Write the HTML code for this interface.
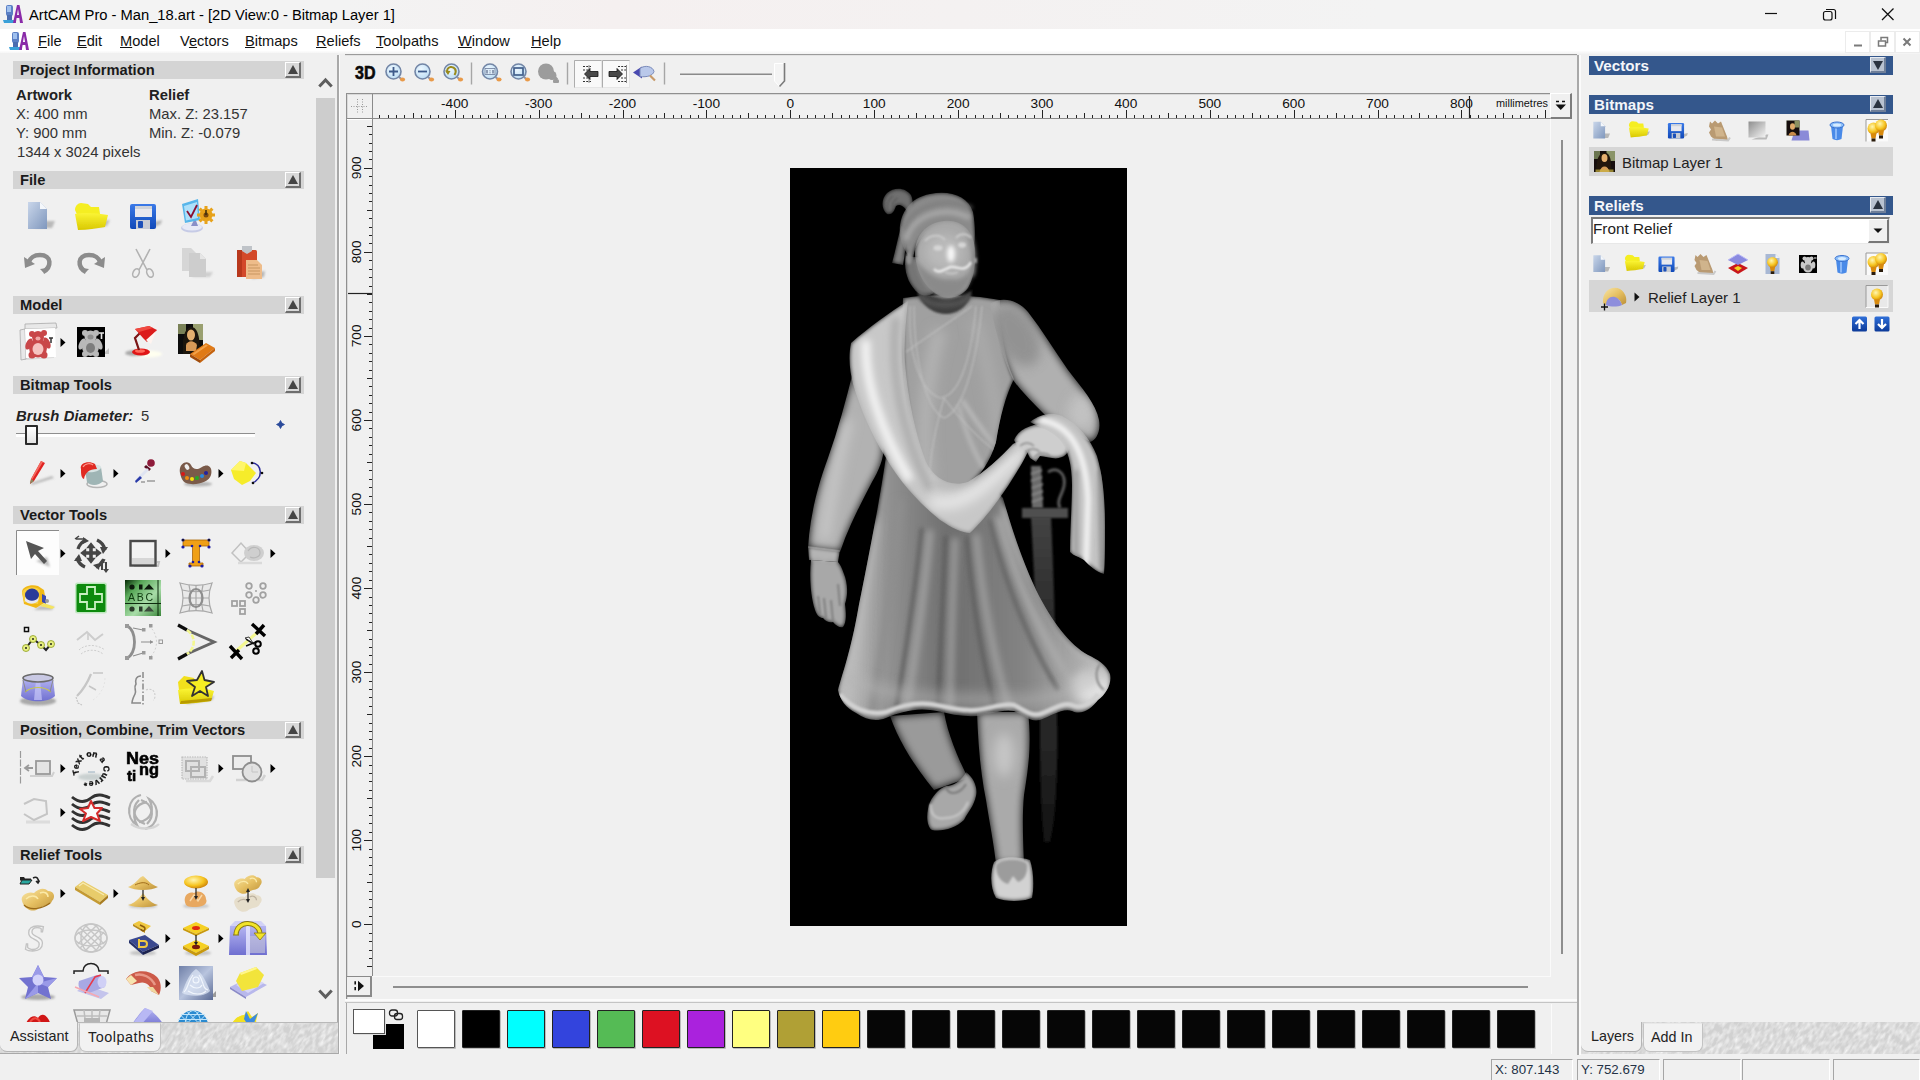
<!DOCTYPE html>
<html><head><meta charset="utf-8"><title>ArtCAM Pro</title>
<style>
*{box-sizing:border-box;margin:0;padding:0}
html,body{width:1920px;height:1080px;overflow:hidden;background:#f0f0f0;font-family:"Liberation Sans",sans-serif;color:#000}
.abs{position:absolute}
#titlebar{position:absolute;left:0;top:0;width:1920px;height:29px;background:linear-gradient(90deg,#f3f3f3 0%,#f3f3f3 18%,#f5f0f0 32%,#f4f1f1 50%,#f3f3f3 72%,#f3f3f3 100%)}
#titlebar .t{position:absolute;left:29px;top:6px;font-size:14.75px;line-height:19px;white-space:nowrap;color:#000;letter-spacing:-0.02px}
#menubar{position:absolute;left:0;top:29px;width:1920px;height:25px;background:linear-gradient(#fff 0,#fff 86%,#f2f2f2 100%)}
#menubar span{position:absolute;top:3px;font-size:14.6px;line-height:19px;white-space:nowrap;color:#111}
#menubar u{text-decoration:underline;text-underline-offset:1px}
/* left panel */
#left{position:absolute;left:0;top:53px;width:338px;height:969px;background:#f0f0f0;overflow:hidden}
.lh{position:absolute;left:12px;width:292px;height:19px;background:#d4d4d4}
.lh b{position:absolute;left:7px;top:1px;font-size:14.7px;line-height:17px;font-weight:700;color:#1a1a1a;white-space:nowrap}
.lh i.btn,.rh i.btn{position:absolute;right:3px;top:1px;width:16px;height:16px;background:#d8d8d8;border-top:1px solid #fff;border-left:1px solid #fff;border-right:2px solid #6e6e6e;border-bottom:2px solid #6e6e6e}
.tri-up{position:absolute;left:2px;top:2px;width:0;height:0;border-left:5px solid transparent;border-right:5px solid transparent;border-bottom:9px solid #444}
.tri-dn{position:absolute;left:2px;top:3px;width:0;height:0;border-left:5px solid transparent;border-right:5px solid transparent;border-top:9px solid #444}
.pi{position:absolute;font-size:14.8px;line-height:19px;color:#333;white-space:nowrap}
.pi b{color:#222}
/* right panel */
.rh{position:absolute;left:1589px;width:304px;height:19px;background:#34578c}
.rh b{position:absolute;left:5px;top:1px;font-size:15.2px;line-height:17px;font-weight:700;color:#f4f6fa;white-space:nowrap}
.row{position:absolute;left:1589px;width:304px;background:#d6d6d6}
.ic{position:absolute;overflow:visible}
</style></head><body>
<div id="titlebar">
 <svg class="abs" style="left:2px;top:3px" width="22" height="22" viewBox="0 0 22 22">
  <rect x="4" y="2" width="7" height="11" rx="2" fill="#5b7fc4"/><rect x="5" y="3" width="4" height="6" fill="#9fc0ee"/>
  <path d="M1 17 L13 17 L14 20 L2 20Z" fill="#3aa0d8"/><rect x="5" y="12" width="5" height="5" fill="#4b6db0"/>
  <path d="M11 20 L15 2 L17.5 2 L21 20 L18 20 L17.3 15 L14.6 15 L13.8 20Z M15 12 L17 12 L16 6Z" fill="#8a2aa8" fill-rule="evenodd"/>
 </svg>
 <div class="t">ArtCAM Pro - Man_18.art - [2D View:0 - Bitmap Layer 1]</div>
 <svg class="abs" style="left:1750px;top:0" width="170" height="29" viewBox="0 0 170 29">
  <path d="M15 13.5h12" stroke="#111" stroke-width="1.2" fill="none"/>
  <rect x="73.500" y="11.500" width="8.500" height="8.500" rx="2" fill="none" stroke="#111" stroke-width="1.200"/>
  <path d="M76 9.500h7.500a2 2 0 0 1 2 2v7.500" fill="none" stroke="#111" stroke-width="1.200"/>
  <path d="M132 8.500l11.500 11.500M143.500 8.500l-11.500 11.500" stroke="#111" stroke-width="1.300" fill="none"/>
 </svg>
</div>
<div id="menubar">
 <svg class="abs" style="left:8px;top:1px" width="22" height="22" viewBox="0 0 22 22">
  <rect x="4" y="2" width="7" height="11" rx="2" fill="#5b7fc4"/><rect x="5" y="3" width="4" height="6" fill="#9fc0ee"/>
  <path d="M1 17 L13 17 L14 20 L2 20Z" fill="#3aa0d8"/><rect x="5" y="12" width="5" height="5" fill="#4b6db0"/>
  <path d="M11 20 L15 2 L17.5 2 L21 20 L18 20 L17.3 15 L14.6 15 L13.8 20Z M15 12 L17 12 L16 6Z" fill="#8a2aa8" fill-rule="evenodd"/>
 </svg>
 <span style="left:38px"><u>F</u>ile</span>
 <span style="left:77px"><u>E</u>dit</span>
 <span style="left:120px"><u>M</u>odel</span>
 <span style="left:180px">V<u>e</u>ctors</span>
 <span style="left:245px"><u>B</u>itmaps</span>
 <span style="left:316px"><u>R</u>eliefs</span>
 <span style="left:376px"><u>T</u>oolpaths</span>
 <span style="left:458px"><u>W</u>indow</span>
 <span style="left:531px"><u>H</u>elp</span>
</div>
<div id="left">
 <!-- coordinates inside #left are page y - 53 -->
 <div class="lh" style="top:8px;left:13px;width:291px;height:18px"><b>Project Information</b><i class="btn"><s class="tri-up"></s></i></div>
 <div class="pi" style="left:16px;top:33px"><b>Artwork</b></div>
 <div class="pi" style="left:16px;top:52px">X: 400 mm</div>
 <div class="pi" style="left:16px;top:71px">Y: 900 mm</div>
 <div class="pi" style="left:17px;top:90px">1344 x 3024 pixels</div>
 <div class="pi" style="left:149px;top:33px"><b>Relief</b></div>
 <div class="pi" style="left:149px;top:52px">Max. Z: 23.157</div>
 <div class="pi" style="left:149px;top:71px">Min. Z: -0.079</div>
 <div class="lh" style="top:118px;left:13px;width:291px;height:18px"><b>File</b><i class="btn"><s class="tri-up"></s></i></div>
 <div class="lh" style="top:243px;left:13px;width:291px;height:18px"><b>Model</b><i class="btn"><s class="tri-up"></s></i></div>
 <div class="lh" style="top:323px;left:13px;width:291px;height:18px"><b>Bitmap Tools</b><i class="btn"><s class="tri-up"></s></i></div>
 <div class="pi" style="left:16px;top:354px;color:#222;letter-spacing:0.150px"><b><i>Brush Diameter:</i></b></div>
 <div class="pi" style="left:141px;top:354px;color:#333">5</div>
 <!-- slider -->
 <div class="abs" style="left:16px;top:380px;width:239px;height:4px;background:linear-gradient(#8e8e8e 0,#8e8e8e 26%,#fdfdfd 30%,#fff 100%)"></div>
 <div class="abs" style="left:25px;top:372px;width:13px;height:20px;background:linear-gradient(#fff,#e4e4e4);border:2px solid #2a2a2a;border-radius:1px"></div>
 <svg class="abs" style="left:275px;top:366px" width="11" height="11" viewBox="-5.500 -5.500 11 11"><path d="M0 -4 Q0.800 -0.800 4 0 Q0.800 0.800 0 4 Q-0.800 0.800 -4 0 Q-0.800 -0.800 0 -4Z" fill="#2a4a9a" stroke="#2a4a9a" stroke-width="0.800"/></svg>
 <div class="lh" style="top:453px;left:13px;width:291px;height:18px"><b>Vector Tools</b><i class="btn"><s class="tri-up"></s></i></div>
 <div class="lh" style="top:668px;left:13px;width:291px;height:18px"><b>Position, Combine, Trim Vectors</b><i class="btn"><s class="tri-up"></s></i></div>
 <div class="lh" style="top:793px;left:13px;width:291px;height:18px"><b>Relief Tools</b><i class="btn"><s class="tri-up"></s></i></div>
 <!-- scrollbar -->
 <div class="abs" style="left:316px;top:45px;width:19px;height:780px;background:#cdcdcd"></div>
 <svg class="abs" style="left:316px;top:20px" width="20" height="20" viewBox="0 0 20 20"><path d="M3.300 13.500 L9.500 7 L15.700 13.500" fill="none" stroke="#5e5e5e" stroke-width="3"/></svg>
 <svg class="abs" style="left:316px;top:930px" width="20" height="20" viewBox="0 0 20 20"><path d="M3.300 7.500 L9.500 14 L15.700 7.500" fill="none" stroke="#5e5e5e" stroke-width="3"/></svg>
 <!--LEFTICONS-->
</div>
<!-- left splitter / border -->
<div class="abs" style="left:337px;top:55px;width:2px;height:1000px;background:#a9a9a9"></div>
<div class="abs" style="left:339px;top:55px;width:1px;height:1000px;background:#fbfbfb"></div>
<!-- bottom tabs of left panel -->
<div class="abs" id="ltabs" style="left:0;top:1022px;width:338px;height:32px;background:#d6d6d6;overflow:hidden">
 <svg class="abs" style="left:0;top:0" width="338" height="32"><defs><filter id="tx" x="0" y="0" width="100%" height="100%"><feTurbulence type="fractalNoise" baseFrequency="0.14 0.30" numOctaves="2" seed="3"/><feColorMatrix type="matrix" values="0 0 0 0 0.93  0 0 0 0 0.93  0 0 0 0 0.93  1.25 1.25 0 0 -0.98"/></filter></defs><rect width="338" height="32" fill="#d1d1d1"/><g transform="rotate(-58 169 16)"><rect x="-120" y="-220" width="578" height="480" filter="url(#tx)"/></g></svg>
 <div class="abs" style="left:0;top:0;width:78px;height:30px;background:#f0f0f0;border-radius:0 0 7px 7px;border-right:1px solid #b5b5b5;border-bottom:1px solid #b5b5b5"></div>
 <div class="abs" style="left:79px;top:1px;width:82px;height:29px;background:#f2f2f2;border-radius:0 0 7px 7px;border:1px solid #c3c3c3;border-top:1px solid #e8e8e8"></div>
 <div class="abs" style="left:78px;top:0;width:260px;height:1px;background:#b9b9b9"></div><div class="abs" style="left:0;top:31px;width:338px;height:1px;background:#a9a9a9"></div>
 <div class="abs" style="left:10px;top:5px;font-size:14.400px;line-height:19px;color:#222">Assistant</div>
 <div class="abs" style="left:88px;top:6px;font-size:14.400px;line-height:19px;color:#222;letter-spacing:0.500px">Toolpaths</div>
</div>
<div class="abs" style="left:0;top:0;width:316px;height:1022px;overflow:hidden">
<svg class="abs" style="left:0;top:0" width="316" height="1040" viewBox="0 0 316 1040">
<defs>
<linearGradient id="gPage" x1="0" y1="0" x2="1" y2="1"><stop offset="0" stop-color="#c9d6ea"/><stop offset="1" stop-color="#7f97bd"/></linearGradient>
<linearGradient id="gFold" x1="0" y1="0" x2="0" y2="1"><stop offset="0" stop-color="#fbf535"/><stop offset="1" stop-color="#d9c800"/></linearGradient>
<linearGradient id="gBlue" x1="0" y1="0" x2="0" y2="1"><stop offset="0" stop-color="#3b7ae8"/><stop offset="1" stop-color="#0f48b8"/></linearGradient>
<linearGradient id="gGold" x1="0" y1="0" x2="1" y2="1"><stop offset="0" stop-color="#f8e6a8"/><stop offset="0.500" stop-color="#e6c062"/><stop offset="1" stop-color="#bc9038"/></linearGradient>
<linearGradient id="gLav" x1="0" y1="0" x2="0" y2="1"><stop offset="0" stop-color="#b5b5f2"/><stop offset="1" stop-color="#6f6fd0"/></linearGradient>
<radialGradient id="gBulb" cx="0.400" cy="0.350" r="0.700"><stop offset="0" stop-color="#fff6b0"/><stop offset="0.600" stop-color="#f6c420"/><stop offset="1" stop-color="#c77b08"/></radialGradient>
<filter id="ib" x="-20%" y="-20%" width="140%" height="140%"><feGaussianBlur stdDeviation="0.450"/></filter>
<filter id="ib1" x="-30%" y="-30%" width="160%" height="160%"><feGaussianBlur stdDeviation="1.200"/></filter>
</defs>
<g transform="translate(38 216)" filter="url(#ib)"><path d="M-3 12 L14 12 L17 5 L4 5Z" fill="#b9b9b9" filter="url(#ib1)"/>
<path d="M-10 -14 L2 -14 L9 -7 L9 13 L-10 13Z" fill="url(#gPage)"/><path d="M2 -14 L2 -7 L9 -7Z" fill="#f4f7fb"/></g>
<g transform="translate(91 216)" filter="url(#ib)"><path d="M-8 12 L16 10 L19 4 L-2 6Z" fill="#bdbdbd" filter="url(#ib1)"/>
<path d="M-16 -6 C-16 -10 -13 -13 -10 -13 L-3 -12 L0 -9 L8 -9 L9 -2 L-12 3Z" fill="#f5ee22"/>
<path d="M-13 14 L-16 -2 C-8 -4 6 -3 17 -1 L14 11 C6 12 -4 14 -13 14Z" fill="url(#gFold)"/></g>
<g transform="translate(143 216)" filter="url(#ib)"><path d="M8 13 L18 8 L19 4 L10 6Z" fill="#b9b9b9" filter="url(#ib1)"/>
<rect x="-13" y="-12" width="26" height="25" rx="2" fill="url(#gBlue)"/><rect x="-8" y="-10" width="17" height="11" fill="#e9e9ee"/><rect x="-8" y="-10" width="17" height="3" fill="#cfd3da"/>
<rect x="-7" y="4" width="14" height="9" fill="#c8ccd4"/><rect x="-5" y="5" width="5" height="7" rx="1" fill="#1a4fb8"/></g>
<g transform="translate(196 216)" filter="url(#ib)"><ellipse cx="-4" cy="12" rx="11" ry="4.500" fill="#c6cbe6"/><ellipse cx="-4" cy="11" rx="10" ry="3.500" fill="#e8eaf6"/>
<path d="M-5 10 L-1 2 L2 10Z" fill="#8a90c8"/>
<path d="M-14 -12 L2 -17 L4 4 L-11 7Z" fill="#58b6ea"/><path d="M-12 -10 L1 -14 L2 2 L-10 4.500Z" fill="#aee0fa"/>
<path d="M-9 -5 L-5 1 L1 -11" fill="none" stroke="#8a1030" stroke-width="1.800"/>
<g transform="translate(10 -1)"><circle r="6.500" fill="#e7a21a"/><g stroke="#e7a21a" stroke-width="3"><path d="M0 -9V9M-9 0H9M-6.400 -6.400L6.400 6.400M-6.400 6.400L6.400 -6.400"/></g><circle r="2.500" fill="#7a4a08"/><path d="M0 -5V0" stroke="#3a2a08" stroke-width="1.500"/></g></g>
<g transform="translate(38 263)" filter="url(#ib)"><path d="M-12 8 H14" stroke="#c4c4c4" stroke-width="3" filter="url(#ib1)"/>
<path d="M5 9 C14 4 14 -8 2 -8 C-4 -8 -8 -5 -9 -1" fill="none" stroke="#8c8c8c" stroke-width="4.500"/><path d="M-14 -6 L-13 5 L-3 1Z" fill="#8c8c8c"/><path d="M5 9 L9 5 L2 6Z" fill="#8c8c8c"/></g>
<g transform="translate(91 263)" filter="url(#ib)"><path d="M-14 8 H12" stroke="#c4c4c4" stroke-width="3" filter="url(#ib1)"/>
<path d="M-5 9 C-14 4 -14 -8 -2 -8 C4 -8 8 -5 9 -1" fill="none" stroke="#8c8c8c" stroke-width="4.500"/><path d="M14 -6 L13 5 L3 1Z" fill="#8c8c8c"/><path d="M-5 9 L-9 5 L-2 6Z" fill="#8c8c8c"/></g>
<g transform="translate(143 263)" filter="url(#ib)"><g fill="none" stroke="#b2b2b2" stroke-width="1.600"><path d="M-7 -14 L4 7M7 -14 L-4 7"/><ellipse cx="-7" cy="10" rx="3" ry="4.500" transform="rotate(25 -7 10)"/><ellipse cx="7" cy="10" rx="3" ry="4.500" transform="rotate(-25 7 10)"/></g></g>
<g transform="translate(196 263)" filter="url(#ib)"><path d="M-4 14 L14 14 L17 9 L0 9Z" fill="#cfcfcf" filter="url(#ib1)"/>
<path d="M-14 -15 L-5 -15 L0 -10 L0 8 L-14 8Z" fill="#d6d6d6"/><path d="M-7 -10 L4 -10 L10 -4 L10 14 L-7 14Z" fill="#cdcdcd"/><path d="M4 -10 L4 -4 L10 -4Z" fill="#e6e6e6"/></g>
<g transform="translate(248 263)" filter="url(#ib)"><path d="M4 16 L16 14 L17 8 L6 10Z" fill="#b5b5b5" filter="url(#ib1)"/>
<rect x="-11" y="-13" width="20" height="27" rx="1.500" fill="#d3482a"/><rect x="-11" y="-13" width="5" height="27" fill="#b8381e"/><path d="M-6 -17 H4 V-12 L-1 -9 L-6 -12Z" fill="#bfc3c8"/>
<path d="M-2 -3 L9 -3 L14 2 L14 16 L-2 16Z" fill="#eebc8a"/><g stroke="#c89660" stroke-width="1"><path d="M0 2H10M0 5H12M0 8H12M0 11H12"/></g></g>
<g transform="translate(38 342)" filter="url(#ib)"><path d="M-17 -10 L-14 18 L16 16 L17 10Z" fill="#d9d9d9"/><path d="M-13 -18 L18 -19 L19 -14 L-13 -13Z" fill="#e8e8e8" stroke="#a9a9a9" stroke-width="0.800"/>
<path d="M-18 -12 L-13 -13 L-12 17 L-17 18Z" fill="#e8e8e8" stroke="#a9a9a9" stroke-width="0.800"/>
<path d="M-13 -13 L17 -14 L18 15 L-12 16Z" fill="#ffffff"/>
<g fill="#c9474a"><circle cx="-6" cy="-8" r="3"/><circle cx="6" cy="-9" r="3"/><circle cx="0" cy="-5" r="6"/><ellipse cx="0" cy="6" rx="9" ry="9.500"/><ellipse cx="-9" cy="2" rx="3" ry="6" transform="rotate(25 -9 2)"/><ellipse cx="9" cy="1" rx="3" ry="6" transform="rotate(-25 9 1)"/><circle cx="-6" cy="13" r="3.500"/><circle cx="6" cy="13" r="3.500"/></g>
<ellipse cx="0" cy="7" rx="5.500" ry="6" fill="#f6c3c0"/><ellipse cx="0" cy="-3.500" rx="2.500" ry="2" fill="#f0a8a6"/>
<path d="M11 -4 h4 M13 -4 v5" stroke="#333" stroke-width="1.500"/></g>
<g transform="translate(91 342)" filter="url(#ib)"><path d="M12 12 L18 6 L18 12Z" fill="#c4c4c4"/><rect x="-14" y="-15" width="28" height="30" fill="#050505"/>
<g fill="#b9b9b9"><circle cx="-6" cy="-9" r="3"/><circle cx="5" cy="-9" r="3"/><circle cx="-0.500" cy="-5.500" r="6"/><ellipse cx="-0.500" cy="5" rx="8.500" ry="9"/><ellipse cx="-9" cy="2" rx="2.800" ry="6" transform="rotate(25 -9 2)"/><ellipse cx="8" cy="2" rx="2.800" ry="6" transform="rotate(-25 8 2)"/><circle cx="-6" cy="12" r="3"/><circle cx="5" cy="12" r="3"/></g>
<ellipse cx="-0.500" cy="6" rx="4.500" ry="5" fill="#7d7d7d"/><ellipse cx="-0.500" cy="-5" rx="3" ry="2.500" fill="#8d8d8d"/>
<path d="M8 -9 h5 M10.500 -9 v6" stroke="#e8e8e8" stroke-width="1.600"/></g>
<g transform="translate(143 342)" filter="url(#ib)"><ellipse cx="4" cy="12" rx="15" ry="3.500" fill="#fffff0" filter="url(#ib1)"/><ellipse cx="-8" cy="11" rx="10" ry="3" fill="#a8a8a8" filter="url(#ib1)"/>
<ellipse cx="-2" cy="10" rx="9" ry="3.500" fill="#e01818"/><ellipse cx="-3" cy="9" rx="5" ry="1.800" fill="#ff6a5a"/>
<path d="M-4 8 L-8 -4 L-2 -10" fill="none" stroke="#7a1414" stroke-width="2.200"/>
<path d="M-8 -13 L6 -16 L14 -12 L4 0 L0 -4Z" fill="#dc1c1c"/><path d="M3 -2 L13 -11 L8 2Z" fill="#fff4f0"/><path d="M-8 -13 L6 -16 L10 -14 L-4 -10Z" fill="#f04a40"/></g>
<g transform="translate(196 342)" filter="url(#ib)"><rect x="-18" y="-18" width="25" height="30" fill="#0d0d08"/><rect x="-3" y="-18" width="10" height="16" fill="#9aa070"/><rect x="-18" y="-18" width="8" height="10" fill="#7a8258"/>
<path d="M-13 12 C-14 -2 -12 -14 -5 -15 C2 -15 4 -4 4 12Z" fill="#1e1408"/><ellipse cx="-5" cy="-7" rx="4" ry="5.500" fill="#e4b070"/><path d="M-10 3 C-8 -2 -2 -2 1 3 L0 9 L-10 9Z" fill="#d89a58"/>
<path d="M-6 12 L10 1 L19 6 L4 18Z" fill="#e07a18"/><path d="M-6 12 L4 18 L4 21 L-6 15Z" fill="#a04c08"/><path d="M4 18 L19 6 L19 9 L4 21Z" fill="#c4620e"/><path d="M-4 12 L10 2.500 L12 3.500 L-2 13Z" fill="#f2a24a"/></g>
<g transform="translate(63 342.5)"><path d="M-2.500 -4.500 L2.500 0 L-2.500 4.500Z" fill="#000"/></g>
<g transform="translate(38 473)" filter="url(#ib)"><path d="M-7 10 L14 3 L16 5 L-6 12Z" fill="#b9b9b9" filter="url(#ib1)"/><path d="M3 -12 L7 -10 L-4 8 L-8 11 L-7 6Z" fill="#e02020"/><path d="M3 -12 L5 -11 L-6 7 L-7 6Z" fill="#f46a60"/><path d="M-7 6 L-4 8 L-8 11Z" fill="#8a8a60"/></g>
<g transform="translate(91 473)" filter="url(#ib)"><ellipse cx="6" cy="11" rx="10" ry="3.500" fill="none" stroke="#b5b5b5" stroke-width="1.500"/><path d="M-6 -3 L10 -6 L12 8 C8 13 -1 13 -4 9Z" fill="#9fb5b5"/><ellipse cx="2" cy="-4.500" rx="8.200" ry="3.500" fill="#d8e4e4" transform="rotate(-10 2 -4.500)"/>
<path d="M-10 -4 C-12 -10 -2 -13 4 -9 L6 -4 C-2 -4 -6 0 -7 6 C-10 5 -10 0 -10 -4Z" fill="#e02a20"/><path d="M-8 -6 C-6 -10 0 -10 2 -8" fill="none" stroke="#ff9a90" stroke-width="1.200"/></g>
<g transform="translate(143 473)" filter="url(#ib)"><path d="M-2 9 h4 M4 8 h8" stroke="#b0b0b0" stroke-width="2" filter="url(#ib)"/><circle cx="8" cy="-10" r="3.800" fill="#8e1a3a"/><path d="M3 -8 L8 -4 L6 -2 L1 -6Z" fill="#5a1024"/><path d="M4 -5 L6 -3 L-5 8 L-7 6Z" fill="#dfe4f2"/><path d="M-3 3 L-1 5 L-7 10 L-8 8Z" fill="#2a3aa8"/></g>
<g transform="translate(196 473)" filter="url(#ib)"><ellipse cx="2" cy="11" rx="14" ry="2.500" fill="#b5b5b5" filter="url(#ib1)"/><path d="M-16 0 C-18 -10 -8 -14 -5 -8 C-3 -3 2 -3 6 -6 C12 -10 17 -6 15 2 C13 10 -2 13 -10 10 C-14 8 -15 4 -16 0Z" fill="#7a5a48"/><ellipse cx="-9" cy="-6" rx="2" ry="3" fill="#f0f0f0" transform="rotate(-30 -9 -6)"/>
<circle cx="-13" cy="1" r="2" fill="#d81818"/><circle cx="-9" cy="5" r="2" fill="#f08a10"/><circle cx="-4" cy="6" r="2" fill="#f4e010"/><circle cx="1" cy="5" r="2" fill="#28a828"/><circle cx="6" cy="3" r="2" fill="#2a8ae0"/><circle cx="10" cy="0" r="2" fill="#2020a0"/></g>
<g transform="translate(248 473)" filter="url(#ib)"><path d="M-12 11 H16" stroke="#b5b5b5" stroke-width="3" filter="url(#ib1)"/><path d="M4 -10 C14 -10 16 6 4 10" fill="none" stroke="#2a2a9a" stroke-width="1.500"/><circle cx="4" cy="-10" r="1.300" fill="#111"/><circle cx="14" cy="0" r="1.300" fill="#111"/><circle cx="5" cy="10" r="1.300" fill="#111"/>
<path d="M-17 -3 L-8 -12 L-2 -10 L4 -4 L8 0 L2 8 L-6 12 L-14 6Z" fill="#f6ec2a"/><path d="M-8 -12 L-2 -10 L-4 -2 L-17 -3Z" fill="#fff66a"/></g>
<g transform="translate(63 473.5)"><path d="M-2.500 -4.500 L2.500 0 L-2.500 4.500Z" fill="#000"/></g>
<g transform="translate(116 473.5)"><path d="M-2.500 -4.500 L2.500 0 L-2.500 4.500Z" fill="#000"/></g>
<g transform="translate(221 473.5)"><path d="M-2.500 -4.500 L2.500 0 L-2.500 4.500Z" fill="#000"/></g>
<g transform="translate(38 553)"><rect x="-22" y="-23" width="43" height="45" fill="#fdfdfd"/><path d="M-21.500 22 V-22.500 H21" fill="none" stroke="#8a8a8a" stroke-width="1"/>
<path d="M-2 8 L12 14 L9 4Z" fill="#bdbdbd" filter="url(#ib1)"/><path d="M-12 -12 L6 -5 L0 -2 L9 8 L6 11 L-3 1 L-7 6Z" fill="#555"/></g>
<g transform="translate(91 553)" filter="url(#ib)"><g fill="none" stroke="#444" stroke-width="3.300"><path d="M-13 -4 A14 14 0 0 1 -5 -13"/><path d="M6 -13 A14 14 0 0 1 14 -3"/><path d="M13 6 A14 14 0 0 1 5 14"/><path d="M-6 14 A14 14 0 0 1 -14 5"/></g>
<g fill="#444"><path d="M-8 -16 L-2 -12 L-8 -9Z"/><path d="M17 -6 L12 1 L9 -6Z"/><path d="M8 17 L2 12 L9 10Z"/><path d="M-17 8 L-12 1 L-9 8Z"/>
<path transform="scale(1.2)" d="M0 -9 L4 -4 H1.500 V-1.500 H4 V-4 L9 0 L4 4 V1.500 H1.500 V4 H4 L0 9 L-4 4 H-1.500 V1.500 H-4 V4 L-9 0 L-4 -4 V-1.500 H-1.500 V-4 H-4Z"/>
<path d="M-15 -14 h7 M-12 -17 l-4 3" stroke="#444" stroke-width="1.500"/><path d="M11 9 v8 M15 9 v8" stroke="#444" stroke-width="2"/><path d="M11 6 l-3 4 h6Z M15 20 l-3 -4 h6Z"/></g></g>
<g transform="translate(143 553)" filter="url(#ib)"><path d="M-9 13 L15 13 L16 9 L14 9" stroke="#c2c2c2" stroke-width="2" fill="none" filter="url(#ib)"/><rect x="-12.500" y="-12" width="25" height="24.500" fill="#f2f2f2" stroke="#484848" stroke-width="2.400"/><rect x="-11" y="5" width="22" height="6" fill="#d6d6d6"/></g>
<g transform="translate(196 553)" filter="url(#ib)"><path d="M-11 7 H14" stroke="#bdbdbd" stroke-width="2.500" filter="url(#ib)"/><path d="M-13 -13 H13 V-7 H3.500 V10 H7 V13 H-7 V10 H-3.500 V-7 H-13Z" fill="#f0a018" stroke="#a86408" stroke-width="0.800"/>
<g fill="#1a1aa0"><circle cx="-13" cy="-13" r="1.600"/><circle cx="13" cy="-13" r="1.600"/><circle cx="-13" cy="-6" r="1.600"/><circle cx="13" cy="-6" r="1.600"/><circle cx="-6" cy="13" r="1.600"/><circle cx="6" cy="13" r="1.600"/><circle cx="-3" cy="9" r="1.300"/><circle cx="3" cy="9" r="1.300"/><circle cx="-4" cy="-7" r="1.300"/><circle cx="4" cy="-7" r="1.300"/></g><circle cx="-13" cy="-13" r="1" fill="#111"/><circle cx="13" cy="-13" r="1" fill="#111"/></g>
<g transform="translate(248 553)" filter="url(#ib)"><g opacity="0.550"><path d="M-16 0 L-7 -10 L2 0 L-7 9Z" fill="none" stroke="#9a9a9a" stroke-width="1.500"/><ellipse cx="6" cy="0" rx="10" ry="8" fill="#b5b5b5"/><path d="M0 -2 C4 -8 12 -6 12 0 C12 4 6 6 2 4" fill="none" stroke="#8a8a8a" stroke-width="1.200"/><path d="M-10 10 H14" stroke="#c8c8c8" stroke-width="2.500"/></g></g>
<g transform="translate(63 553.5)"><path d="M-2.500 -4.500 L2.500 0 L-2.500 4.500Z" fill="#000"/></g>
<g transform="translate(168 553.5)"><path d="M-2.500 -4.500 L2.500 0 L-2.500 4.500Z" fill="#000"/></g>
<g transform="translate(273 553.5)"><path d="M-2.500 -4.500 L2.500 0 L-2.500 4.500Z" fill="#000"/></g>
<g transform="translate(38 598)" filter="url(#ib)"><path d="M-4 12 L14 12 L16 8 L2 8Z" fill="#bdbdbd" filter="url(#ib1)"/><path d="M-16 -6 C-16 -12 -6 -14 0 -12 L6 -8 L8 4 L-2 10 L-14 6Z" fill="#f0b818"/><path d="M-16 -6 C-12 -12 -2 -12 2 -8 L0 6 L-14 4Z" fill="#f8d040"/>
<ellipse cx="-6" cy="-3" rx="7" ry="6.500" fill="#2a3a9a"/><path d="M-13 -1 C-10 4 -2 4 1 -1 L0 3 C-4 7 -10 6 -13 3Z" fill="#e8e8f0"/><path d="M4 -4 L8 -2 L8 6 L4 4Z" fill="#3a4ab0"/>
<path d="M2 8 L14 11 L17 9 L6 5Z" fill="#f4e460"/><circle cx="9" cy="3" r="2" fill="#9a9a9a"/></g>
<g transform="translate(91 598)" filter="url(#ib)"><rect x="-16" y="-15.500" width="32" height="31" rx="2.500" fill="#bfe8bf"/><rect x="-14.500" y="-14" width="29" height="28" rx="1.500" fill="#0c8a0c"/><path d="M-4 -11 H4 V-4 H11 V4 H4 V11 H-4 V4 H-11 V-4 H-4Z" fill="none" stroke="#c8f0c0" stroke-width="1.800"/></g>
<g transform="translate(143 598)" filter="url(#ib)"><defs><linearGradient id="gAbc" x1="0" y1="0" x2="1" y2="1"><stop offset="0" stop-color="#062806"/><stop offset="0.250" stop-color="#58a858"/><stop offset="0.600" stop-color="#a8dca8"/><stop offset="1" stop-color="#3c883c"/></linearGradient></defs>
<rect x="-18" y="-18" width="36" height="36" fill="url(#gAbc)"/><g stroke="#0a2a0a" stroke-width="1"><path d="M-18 5.500 H18M15 -18V18"/></g>
<g fill="#0c1c0c"><circle cx="-11" cy="-11" r="2.600"/><rect x="-4" y="-13.500" width="3.500" height="5"/><path d="M1 -8.500 L6 -14 L11 -8.500Z"/><circle cx="-11" cy="11" r="2.600" fill="#2a3a2a"/><rect x="-4" y="8.500" width="3.500" height="5" fill="#2a3a2a"/><path d="M1 13.500 L6 8 L11 13.500Z" fill="#3a4a3a"/></g>
<text x="-15" y="2.500" font-family="Liberation Sans" font-size="10.500" fill="#0f3a0f" textLength="25">ABC</text></g>
<g transform="translate(196 598)" filter="url(#ib)"><g fill="none" stroke="#a9a9a9" stroke-width="1.200"><path d="M-16 -15 C-6 -12 6 -12 16 -15 C12 -5 12 5 16 15 C6 12 -6 12 -16 15 C-12 5 -12 -5 -16 -15Z" fill="#e9e9e9"/><path d="M-14 -8 C-5 -6 5 -6 14 -8M-13 0 H13M-14 8 C-5 6 5 6 14 8M-7 -13 C-5 -5 -5 5 -7 13M0 -12.500V12.500M7 -13 C5 -5 5 5 7 13"/><ellipse cx="0" cy="0" rx="6.500" ry="9" stroke="#8e8e8e" stroke-width="2.200"/></g></g>
<g transform="translate(248 598)" filter="url(#ib)"><g fill="none" stroke="#a2a2a2" stroke-width="1.800"><rect x="-16" y="3" width="5" height="5"/><rect x="-8" y="3" width="5" height="5"/><rect x="-8" y="11" width="5" height="5"/><circle cx="1" cy="-12" r="2.800"/><circle cx="15" cy="-12" r="2.800"/><circle cx="1" cy="-3" r="2.800"/><circle cx="15" cy="-3" r="2.800"/><circle cx="8" cy="2" r="2.800"/></g><circle cx="8" cy="-7" r="1" fill="#a2a2a2"/></g>
<g transform="translate(38 642)" filter="url(#ib)"><rect x="-13.500" y="-14.500" width="4" height="4" fill="#fff" stroke="#111" stroke-width="1.500"/><path d="M-12 6 L-5 -3 L3 3 L8 8 L13 2" fill="none" stroke="#222" stroke-width="2"/>
<g fill="#e8f080" stroke="#8a9a20" stroke-width="0.800"><circle cx="-12" cy="6" r="3.500"/><circle cx="-5" cy="-3" r="3.500"/><circle cx="3" cy="3" r="3.500"/><circle cx="13" cy="2" r="3.500"/></g><g fill="#222"><circle cx="-12" cy="6" r="1"/><circle cx="-5" cy="-3" r="1"/><circle cx="3" cy="3" r="1"/><circle cx="13" cy="2" r="1"/></g></g>
<g transform="translate(91 642)" filter="url(#ib)"><g opacity="0.500" fill="none" stroke="#a9a9a9"><path d="M-14 -2 L-4 -10 L4 -2 L12 -8" stroke-width="2"/><path d="M-12 8 C-6 2 6 2 14 8M-10 12 C-4 7 6 7 12 12" stroke-width="1" stroke-dasharray="2 1.500"/><path d="M-3 -8 v6" stroke-width="1.500"/></g></g>
<g transform="translate(143 642)" filter="url(#ib)"><g fill="none" stroke="#8e8e8e"><path d="M-16 -16 C-6 -12 -6 12 -16 16" stroke-width="2.800"/><path d="M-10 -14 L0 -12M-10 14 L0 11M-2 0 H10" stroke-width="1.200"/><path d="M6 -16 C16 -8 16 8 6 16" stroke="#d0d0d0" stroke-width="1" stroke-dasharray="2 2"/></g>
<g fill="#9a9a9a"><rect x="-18" y="-18" width="4" height="4"/><rect x="-18" y="14" width="4" height="4"/><rect x="-1" y="-14" width="3.500" height="3.500"/><rect x="-1" y="9" width="3.500" height="3.500"/><rect x="6" y="-18" width="3.500" height="3.500"/><rect x="6" y="14" width="3.500" height="3.500"/></g><rect x="16" y="-2" width="3.500" height="3.500" fill="none" stroke="#9a9a9a"/><path d="M10 0 l-3 -2 v4Z" fill="#8e8e8e"/></g>
<g transform="translate(196 642)" filter="url(#ib)"><path d="M-18 -17 L-9 -12" stroke="#111" stroke-width="3.200"/><path d="M-18 17 L-9 12" stroke="#111" stroke-width="3.200"/><path d="M-9 -12 L18 0 L-9 12" fill="none" stroke="#666" stroke-width="3"/><path d="M-9 -12 C0 -6 0 6 -9 12" fill="none" stroke="#f4f890" stroke-width="2.600" stroke-dasharray="5 1.500"/></g>
<g transform="translate(248 642)" filter="url(#ib)"><path d="M-13 10 L12 -12" stroke="#f4f890" stroke-width="3"/><g stroke="#050505" stroke-width="3.400"><path d="M-18 4 L-6 17M-17 16 L-9 8"/><path d="M4 -18 L17 -6M8 -8 L16 -17"/></g>
<path d="M-2 -3 L6 2 M-2 4 L8 0" stroke="#111" stroke-width="1.500"/><path d="M-3 -4 L1 -5 L5 1Z" fill="#fff" stroke="#111" stroke-width="0.800"/><circle cx="10" cy="2" r="2.800" fill="none" stroke="#050505" stroke-width="2"/><circle cx="8" cy="9" r="2.800" fill="none" stroke="#050505" stroke-width="2"/></g>
<g transform="translate(38 688)" filter="url(#ib)"><ellipse cx="0" cy="13" rx="18" ry="4.500" fill="#a9a9a9" filter="url(#ib1)"/><path d="M-15 -10 L-17 8 C-10 15 10 15 17 8 L15 -10Z" fill="url(#gLav)"/><path d="M-2 -8 L2 -8 L4 12 L-4 12Z" fill="#c8c8f8" opacity="0.700"/>
<ellipse cx="0" cy="-10" rx="15" ry="4" fill="#c9c9e4" stroke="#6a6a6a" stroke-width="1.600"/><path d="M-13 4 C-6 -2 6 -2 13 4" fill="none" stroke="#c8c850" stroke-width="1.200"/><path d="M-15 -8 L-12 4M15 -8 L12 4" stroke="#8a8a8a" stroke-width="1"/></g>
<g transform="translate(91 688)" filter="url(#ib)"><g opacity="0.550" fill="none" stroke="#a2a2a2"><path d="M0 -14 C-4 -4 -8 2 -14 8" stroke-width="2.200"/><path d="M2 -15 h10 M-2 -2 l7 4" stroke-width="1.500"/><path d="M-15 9 l2 6 l4 2" stroke-width="1.200" stroke-dasharray="2 1"/><path d="M14 -10 C14 0 8 8 2 12" stroke="#d8d8d8" stroke-width="1" stroke-dasharray="2 2"/></g></g>
<g transform="translate(143 688)" filter="url(#ib)"><g fill="none" stroke="#8a8a8a"><path d="M-2 -12 C-7 -12 -8 -8 -7 -4 C-10 0 -6 2 -8 6 C-10 10 -11 12 -11 15 H-2" stroke-width="1.600"/><path d="M0 -16 V17" stroke-width="1.500" stroke-dasharray="6 2 1.500 2"/><path d="M3 2 C8 0 12 2 12 8 C12 10 11 12 10 12" stroke="#cfcfcf" stroke-width="1.200" stroke-dasharray="2 1.500"/></g></g>
<g transform="translate(196 688)" filter="url(#ib)"><path d="M-10 16 L16 12 L18 8 L-6 11Z" fill="#a9a9a9" filter="url(#ib1)"/><path d="M-18 -6 L-12 -12 L-2 -10 L0 -4 L8 -4 L6 6 L-16 10Z" fill="#f2e01a"/><path d="M-16 16 L-18 2 C-8 0 8 0 18 3 L15 13 C6 14 -6 16 -16 16Z" fill="url(#gFold)"/><path d="M-16 16 L15 13 L16 10 L-15 13Z" fill="#b89a00"/>
<path d="M6 -17 L8.500 -8 L18 -6 L10 -1 L12 8 L4 3 L-4 8 L-1 -1 L-9 -7 L1 -8Z" fill="#f6ee20" stroke="#333" stroke-width="1.800" stroke-linejoin="round"/></g>
<g transform="translate(38 768)" filter="url(#ib)"><path d="M-17.500 -17 V17" stroke="#9a9a9a" stroke-width="1.200" stroke-dasharray="7 1.500"/><path d="M-8 8 L14 8 L16 4" stroke="#d0d0d0" stroke-width="2" fill="none"/><rect x="-2" y="-7" width="14" height="13" fill="#e4e4e4" stroke="#9a9a9a" stroke-width="1.800"/><path d="M-5 0 H-12 M-9 -3 L-13 0 L-9 3" fill="none" stroke="#9a9a9a" stroke-width="1.800"/></g>
<g transform="translate(91 768)" filter="url(#ib)"><ellipse cx="0" cy="9" rx="13" ry="3.500" fill="#c9d0d0" filter="url(#ib1)"/><defs><path id="tcp" d="M-11.500 6 A12.500 12.500 0 1 1 11.500 6 A12.500 12.500 0 0 1 -9 9"/></defs>
<text font-family="Liberation Sans" font-weight="700" font-size="8.400" fill="#111" stroke="#111" stroke-width="0.350" letter-spacing="0.200"><textPath href="#tcp">Text on a Curve*</textPath></text><path d="M-3 4 H4" stroke="#9ab0c0" stroke-width="1"/></g>
<g transform="translate(143 768)" filter="url(#ib)"><g font-family="Liberation Sans" font-weight="700" fill="#050505" stroke="#050505" stroke-width="0.600"><text x="-17" y="-4" font-size="17" textLength="33" lengthAdjust="spacingAndGlyphs">Nes</text><text x="-4" y="7" font-size="17" textLength="20" lengthAdjust="spacingAndGlyphs">ng</text><text x="-16" y="13" font-size="15">ti</text></g></g>
<g transform="translate(196 768)" filter="url(#ib)"><g opacity="0.750"><path d="M-10 13 L14 13 L17 8" stroke="#d2d2d2" stroke-width="2.500" fill="none"/><rect x="-14" y="-11" width="25" height="22" fill="#dcdcdc" stroke="#a9a9a9" stroke-width="1.200" stroke-dasharray="1.500 1"/><rect x="-10" y="-7" width="13" height="10" fill="none" stroke="#9c9c9c" stroke-width="2"/><rect x="-5" y="-1" width="14" height="10" fill="none" stroke="#9c9c9c" stroke-width="2"/></g></g>
<g transform="translate(248 768)" filter="url(#ib)"><path d="M-12 12 L14 12 L17 7" stroke="#d2d2d2" stroke-width="2.500" fill="none"/><rect x="-15" y="-12" width="18" height="13" fill="#ececec" stroke="#8e8e8e" stroke-width="1.800"/><circle cx="4" cy="4" r="9.500" fill="#e2e2e2" stroke="#8e8e8e" stroke-width="1.800"/><path d="M4 -2 v6 h6" stroke="#c4c4c4" stroke-width="1" fill="none"/></g>
<g transform="translate(63 768.5)"><path d="M-2.500 -4.500 L2.500 0 L-2.500 4.500Z" fill="#000"/></g>
<g transform="translate(221 768.5)"><path d="M-2.500 -4.500 L2.500 0 L-2.500 4.500Z" fill="#000"/></g>
<g transform="translate(273 768.5)"><path d="M-2.500 -4.500 L2.500 0 L-2.500 4.500Z" fill="#000"/></g>
<g transform="translate(38 812)" filter="url(#ib)"><g opacity="0.600" fill="none"><path d="M-12 10 H12" stroke="#cfcfcf" stroke-width="3"/><path d="M-14 -8 L-4 -13 L8 -11 L9 2 L-4 8 L-14 2" stroke="#a9a9a9" stroke-width="2"/></g></g>
<g transform="translate(91 812)" filter="url(#ib)"><g fill="none" stroke="#333" stroke-width="2.900"><path d="M-19 -15 C-12 -9 -6 -9 0 -14 C6 -19 12 -17 19 -14"/><path d="M-19 -8 C-12 -2 -6 -2 0 -7 C6 -12 12 -10 19 -7"/><path d="M-19 -1 C-12 5 -6 5 0 0 C6 -5 12 -3 19 0"/><path d="M-19 6 C-12 12 -6 12 0 7 C6 2 12 4 19 7"/><path d="M-19 13 C-12 19 -6 19 0 14 C6 9 12 11 19 14"/></g>
<path d="M0 -11 L3.500 -4 L11 -4 L6 1.500 L9 9 L0 5 L-8 9 L-5 1.500 L-11 -3 L-3 -4Z" fill="#fafafa" stroke="#d42a2a" stroke-width="2" stroke-linejoin="round"/></g>
<g transform="translate(143 812)" filter="url(#ib)"><g fill="none" stroke="#a6a6a6" stroke-width="2.300" opacity="0.850"><path d="M-2 -17 C-16 -14 -18 6 -6 13 C-12 2 -8 -8 4 -10"/><path d="M2 17 C16 14 18 -6 6 -13 C12 -2 8 8 -4 10"/><path d="M-4 -12 C-12 -4 -10 8 2 12M4 12 C12 4 10 -8 -2 -12"/><path d="M-12 12 C-4 18 10 18 16 12" stroke="#d0d0d0"/></g></g>
<g transform="translate(63 812.5)"><path d="M-2.500 -4.500 L2.500 0 L-2.500 4.500Z" fill="#000"/></g>
<g transform="translate(38 893)" filter="url(#ib)"><g transform="translate(0 6)"><path d="M-16 2 C-18 -4 -10 -8 -4 -6 C0 -10 6 -12 10 -8 C16 -8 18 -2 14 2 C12 8 4 6 0 10 C-6 14 -14 10 -16 2Z" fill="url(#gGold)"/><path d="M-12 0 C-8 -4 -2 -4 0 0M2 -6 C6 -8 10 -6 10 -2" fill="none" stroke="#fbeaa8" stroke-width="1.500"/><path d="M-14 6 C-8 12 4 10 12 4" fill="none" stroke="#9a6a1a" stroke-width="1.200"/></g>
<path d="M-18 -16 h4 l1 1.500 h6 v2 h-11Z" fill="#222"/><path d="M-18 -9 L-16 -13 H-6 L-9 -9Z" fill="#2aa8a0" stroke="#222" stroke-width="1"/><path d="M-5 -15 C-1 -17 1 -14 0 -11 M-2 -12 l2 2 l1.500 -2.500" fill="none" stroke="#222" stroke-width="1.500"/></g>
<g transform="translate(91 893)" filter="url(#ib)"><path d="M-16 -6 L-8 -12 L17 2 L9 9Z" fill="#e8cc6a"/><path d="M-16 -6 L9 9 L9 12 L-16 -3Z" fill="#c49a32"/><path d="M9 9 L17 2 L17 5 L9 12Z" fill="#a87c20"/><path d="M-12 -7 L-8 -10 L13 2" fill="none" stroke="#f8eab0" stroke-width="1.200"/></g>
<g transform="translate(143 893)" filter="url(#ib)"><ellipse cx="0" cy="13" rx="14" ry="2.500" fill="#c9c9c9" filter="url(#ib1)"/><path d="M-15 -6 C-8 -8 -4 -16 0 -17 C4 -14 8 -8 15 -6 C8 -2 -8 -2 -15 -6Z" fill="url(#gGold)"/><path d="M-8 -8 C-4 -10 2 -12 6 -8" fill="none" stroke="#a06c1a" stroke-width="1"/>
<path d="M-15 12 C-6 10 -2 2 0 0 C2 2 6 10 15 12 C6 15 -6 15 -15 12Z" fill="url(#gGold)"/><path d="M0 -3 V6" stroke="#222" stroke-width="1.200"/><path d="M-2 4 L0 8 L2 4Z" fill="#222"/></g>
<g transform="translate(196 893)" filter="url(#ib)"><ellipse cx="0" cy="13" rx="13" ry="2.500" fill="#c9c9c9" filter="url(#ib1)"/><ellipse cx="0" cy="-11" rx="12" ry="6.500" fill="url(#gBulb)"/><path d="M-10 12 C-14 4 -8 -2 -2 0 C2 -4 10 0 10 6 C12 10 8 14 0 14 C-4 14 -8 14 -10 12Z" fill="#e8a860"/><path d="M-6 8 L-2 2 L2 8 L6 2" fill="none" stroke="#f8d8a8" stroke-width="1.500"/><path d="M0 -5 V5" stroke="#222" stroke-width="1.200"/><path d="M-2 3 L0 7 L2 3Z" fill="#222"/></g>
<g transform="translate(248 893)" filter="url(#ib)"><g transform="translate(0 -9) scale(0.85)"><path d="M-16 2 C-18 -4 -10 -8 -4 -6 C0 -10 6 -12 10 -8 C16 -8 18 -2 14 2 C12 8 4 6 0 10 C-6 14 -14 10 -16 2Z" fill="url(#gGold)"/><path d="M-12 0 C-8 -4 -2 -4 0 0M2 -6 C6 -8 10 -6 10 -2" fill="none" stroke="#fbeaa8" stroke-width="1.500"/></g><g transform="translate(0 9) scale(0.85)" opacity="0.900"><path d="M-16 2 C-18 -4 -10 -8 -4 -6 C0 -10 6 -12 10 -8 C16 -8 18 -2 14 2 C12 8 4 6 0 10 C-6 14 -14 10 -16 2Z" fill="#e6dcc8"/><path d="M-12 0 C-8 -4 -2 -4 0 0M2 -6 C6 -8 10 -6 10 -2" fill="none" stroke="#b8ac98" stroke-width="1.500"/></g><path d="M0 -3 V8" stroke="#222" stroke-width="1.200"/><path d="M-2 -1 L0 -5 L2 -1Z M-2 6 L0 10 L2 6Z" fill="#222"/></g>
<g transform="translate(63 893.5)"><path d="M-2.500 -4.500 L2.500 0 L-2.500 4.500Z" fill="#000"/></g>
<g transform="translate(116 893.5)"><path d="M-2.500 -4.500 L2.500 0 L-2.500 4.500Z" fill="#000"/></g>
<g transform="translate(38 938)" filter="url(#ib)"><g opacity="0.800"><text x="-13" y="13" font-family="Liberation Serif" font-style="italic" font-size="38" fill="#f6f6f6" stroke="#b8b8b8" stroke-width="1.300">S</text></g></g>
<g transform="translate(91 938)" filter="url(#ib)"><g fill="none" stroke="#c2c2c2" stroke-width="1.500" opacity="0.900"><ellipse cx="0" cy="0" rx="16" ry="14"/><ellipse cx="0" cy="0" rx="10" ry="14"/><ellipse cx="0" cy="0" rx="16" ry="8"/><path d="M-11 -10 L11 10M11 -10 L-11 10M-6 -13 L13 6M6 -13 L-13 6M-13 -6 L6 13M13 -6 L-6 13"/></g></g>
<g transform="translate(143 938)" filter="url(#ib)"><ellipse cx="0" cy="15" rx="13" ry="2.500" fill="#c4c4c4" filter="url(#ib1)"/><path d="M-10 -14 L-4 -17 L8 -12 L2 -7Z" fill="#f0c840"/><path d="M-10 -14 L2 -7 L2 -5 L-10 -12Z" fill="#b88a18"/><path d="M-3 -13 l4 2 a2 2 0 1 1 -3 2" fill="none" stroke="#8a5a08" stroke-width="1.500"/>
<path d="M-14 2 L2 -3 L16 7 L0 14Z" fill="#3a4a90"/><path d="M-14 2 L0 14 L0 17 L-14 5Z" fill="#26306a"/><path d="M0 14 L16 7 L16 10 L0 17Z" fill="#1c2450"/><path d="M-4 1 v8 h5 a3 3 0 0 0 0 -6 h-5" fill="none" stroke="#f0c840" stroke-width="2"/></g>
<g transform="translate(196 938)" filter="url(#ib)"><ellipse cx="2" cy="15" rx="13" ry="2.500" fill="#c4c4c4" filter="url(#ib1)"/><path d="M-13 -10 L0 -16 L13 -10 L0 -4Z" fill="#f6d020"/><path d="M-13 -10 L0 -4 L0 -2 L-13 -8Z M0 -4 L13 -10 L13 -8 L0 -2Z" fill="#c89808"/><ellipse cx="0" cy="-10" rx="4" ry="2" fill="#e02a10"/>
<path d="M-13 8 L0 2 L13 8 L0 15Z" fill="#f6d020"/><path d="M-13 8 L0 15 L0 18 L-13 11Z M0 15 L13 8 L13 11 L0 18Z" fill="#c89808"/><ellipse cx="0" cy="9" rx="4" ry="2.200" fill="#7a1a08"/><path d="M0 -3 V6" stroke="#222" stroke-width="1.300"/><path d="M-2 4 L0 7.500 L2 4Z" fill="#222"/></g>
<g transform="translate(248 938)" filter="url(#ib)"><path d="M-18 -12 L18 -12 L19 17 L-19 17Z" fill="url(#gLav)"/><path d="M-18 -12 L-13 -17 L13 -17 L18 -12Z" fill="#d2d2f6"/><path d="M-2 -12 H2 V17 H-2Z" fill="#e8e8ff" opacity="0.800"/><path d="M2 -2 H17 V15 H2Z" fill="#c8c8d8" opacity="0.600"/>
<path d="M-12 -3 C-12 -18 10 -18 12 -5" fill="none" stroke="#8a7a10" stroke-width="5"/><path d="M-12 -3 C-12 -18 10 -18 12 -5" fill="none" stroke="#f2e42a" stroke-width="3.200"/><path d="M6 -5 H18 L12 2Z" fill="#f2e42a" stroke="#8a7a10" stroke-width="0.800"/><path d="M-15 -3 h6" stroke="#8a7a10" stroke-width="1"/></g>
<g transform="translate(168 938.5)"><path d="M-2.500 -4.500 L2.500 0 L-2.500 4.500Z" fill="#000"/></g>
<g transform="translate(221 938.5)"><path d="M-2.500 -4.500 L2.500 0 L-2.500 4.500Z" fill="#000"/></g>
<g transform="translate(38 983)" filter="url(#ib)"><ellipse cx="0" cy="14" rx="17" ry="3" fill="#a9a9a9" filter="url(#ib1)"/><path d="M0 -18 L6 -6 L19 -5 L10 4 L13 16 L0 10 L-13 16 L-10 4 L-19 -5 L-6 -6Z" fill="#7272d0"/><path d="M0 -18 L6 -6 L0 0 L-6 -6Z M19 -5 L10 4 L0 0Z M-13 16 L0 10 L0 0Z" fill="#9a9ae8"/><circle cx="0" cy="-3" r="5.500" fill="#d2d2fa"/></g>
<g transform="translate(91 983)" filter="url(#ib)"><path d="M-17 -9 V-12 H-8 C-8 -22 8 -22 8 -12 H17 V-9" fill="none" stroke="#222" stroke-width="1.500"/><path d="M-14 8 L10 16 L18 10 L-6 2Z" fill="#c4c4ec"/><path d="M-12 -2 L6 -8 C12 -8 16 -2 14 4 L-2 10 C-10 10 -14 4 -12 -2Z" fill="#a8a8e4"/><ellipse cx="11" cy="-1" rx="4.500" ry="6" fill="#d0d0f6"/><path d="M-6 10 L4 -6 L10 -8" fill="none" stroke="#e83a4a" stroke-width="1.500"/><path d="M-16 4 L8 14" stroke="#f6a8b0" stroke-width="1.500"/></g>
<g transform="translate(143 983)" filter="url(#ib)"><path d="M-17 -4 C-10 -14 6 -14 14 -6 C18 -2 19 6 16 12 L8 8 C8 2 2 -2 -4 0 L-12 2Z" fill="#cc5a48"/><path d="M-8 -8 C0 -10 8 -6 12 2" fill="none" stroke="#e89888" stroke-width="2.500"/><path d="M-17 -4 L-12 2 L-6 -2 L-12 -8Z" fill="#f6e4b0"/><path d="M8 8 L16 12 L10 4 L4 4Z" fill="#f0d8a0"/></g>
<g transform="translate(196 983)" filter="url(#ib)"><path d="M14 14 L20 8 L20 14Z" fill="#9a9a9a"/><defs><linearGradient id="gIce" x1="0" y1="0" x2="1" y2="1"><stop offset="0" stop-color="#7080a8"/><stop offset="0.500" stop-color="#b8c4de"/><stop offset="1" stop-color="#5a6a94"/></linearGradient></defs><rect x="-17" y="-17" width="34" height="34" fill="url(#gIce)"/>
<path d="M0 -14 C-6 -10 -10 -2 -14 10 C-6 14 8 14 14 8 C10 -2 6 -10 0 -14Z" fill="#dfe8f6" opacity="0.700"/><g fill="none" stroke="#f6faff" stroke-width="1.100" opacity="0.900"><path d="M-3 -8 C-8 -2 -8 6 -12 9M3 -8 C8 -2 6 6 12 7M-6 2 C-2 6 4 6 6 2M-8 8 C-2 12 6 12 10 8"/><circle cx="0" cy="-3" r="3"/></g></g>
<g transform="translate(248 983)" filter="url(#ib)"><path d="M-14 10 H16" stroke="#a9a9a9" stroke-width="3" filter="url(#ib1)"/><path d="M-18 4 L2 -6 L19 2 L-2 14Z" fill="#b8b8ec"/><path d="M-18 4 L-2 14 L-2 16 L-18 6Z" fill="#8a8ac8"/><path d="M-12 2 L4 -6 L16 0 L0 10Z" fill="#d6d6f6"/><path d="M-8 -10 L8 -16 L16 -8 L10 4 L-6 8 L-12 -2Z" fill="#f2e43a"/><path d="M-8 -10 L8 -16 L9 -14 L-7 -8Z" fill="#fff68a"/></g>
<g transform="translate(168 983.5)"><path d="M-2.500 -4.500 L2.500 0 L-2.500 4.500Z" fill="#000"/></g>
<g transform="translate(38 1016)" filter="url(#ib)"><path d="M-14 12 C-10 0 -4 -2 0 2 C4 -4 10 -2 14 12Z" fill="#d01818"/><path d="M-8 6 C-4 0 0 2 2 6" fill="none" stroke="#f04a40" stroke-width="2"/></g>
<g transform="translate(92 1012)" filter="url(#ib)"><path d="M-18 -2 H18 L13 16 H-13Z" fill="#e8e8e8" stroke="#9a9a9a" stroke-width="1.500"/><path d="M-15 4 H15M-8 -2 L-6 16M8 -2 L6 16M0 -2V16" stroke="#bdbdbd" stroke-width="1.500"/><path d="M-8 6 h16 v6 h-16z" fill="#b5b5b5"/></g>
<g transform="translate(147 1015)" filter="url(#ib)"><path d="M-17 12 C-10 2 -4 -6 -2 -7 C6 -4 12 2 18 12Z" fill="url(#gLav)"/><path d="M-2 -7 L6 -4 L-6 10 L-17 12Z" fill="#b8b8f4"/></g>
<g transform="translate(193 1011.5)" filter="url(#ib)"><circle cx="0" cy="14" r="15" fill="#2a8ad0"/><g fill="none" stroke="#bfe4fa" stroke-width="1"><ellipse cx="0" cy="14" rx="8" ry="15"/><path d="M-15 8 H15M-12 3 H12M-6 0 L6 12M6 0 L-6 12M-12 4 L0 16M12 4 L0 16"/></g></g>
<g transform="translate(244 1015)" filter="url(#ib)"><path d="M-14 14 C-12 4 -4 0 0 0 L4 -4 L8 2 L14 -2 L12 6 L16 14Z" fill="#f2e020"/><path d="M2 -4 L6 4 L14 -2 L10 8 L4 10 L0 4Z" fill="#3a8ae0"/></g>
</svg></div>
<div class="abs" style="left:345px;top:54px;width:1232px;height:1px;background:#9b9b9b"></div>
<div class="abs" style="left:345px;top:55px;width:1232px;height:1px;background:#e3e3e3"></div>
<svg class="abs" style="left:340px;top:90px" width="1240" height="912" viewBox="340 90 1240 912" font-family="Liberation Sans" shape-rendering="crispEdges">
<path d="M346.5 1000 V93.500 H1571.500" fill="none" stroke="#8f8f8f" stroke-width="1"/>
<path d="M347.500 999 V94.500 H1571" fill="none" stroke="#d9d9d9" stroke-width="1"/>
<path d="M347 118.500 H1550" stroke="#8a8a8a" stroke-width="1" fill="none"/>
<path d="M372.500 94 V976" stroke="#8a8a8a" stroke-width="1" fill="none"/>
<path d="M347 119.500 H372" stroke="#fff" stroke-width="1" fill="none"/>
<path d="M1550.500 119 V976.500 H372" stroke="#fafafa" stroke-width="1" fill="none"/>
<path d="M379.5 115 V118" stroke="#222" stroke-width="1"/>
<path d="M388.5 115 V118" stroke="#222" stroke-width="1"/>
<path d="M396.5 115 V118" stroke="#222" stroke-width="1"/>
<path d="M404.5 115 V118" stroke="#222" stroke-width="1"/>
<path d="M413.5 113 V118" stroke="#222" stroke-width="1"/>
<path d="M421.5 115 V118" stroke="#222" stroke-width="1"/>
<path d="M430.5 115 V118" stroke="#222" stroke-width="1"/>
<path d="M438.5 115 V118" stroke="#222" stroke-width="1"/>
<path d="M446.5 115 V118" stroke="#222" stroke-width="1"/>
<path d="M455.5 110 V118" stroke="#222" stroke-width="1"/>
<path d="M463.5 115 V118" stroke="#222" stroke-width="1"/>
<path d="M472.5 115 V118" stroke="#222" stroke-width="1"/>
<path d="M480.5 115 V118" stroke="#222" stroke-width="1"/>
<path d="M488.5 115 V118" stroke="#222" stroke-width="1"/>
<path d="M497.5 113 V118" stroke="#222" stroke-width="1"/>
<path d="M505.5 115 V118" stroke="#222" stroke-width="1"/>
<path d="M513.5 115 V118" stroke="#222" stroke-width="1"/>
<path d="M522.5 115 V118" stroke="#222" stroke-width="1"/>
<path d="M530.5 115 V118" stroke="#222" stroke-width="1"/>
<path d="M539.5 110 V118" stroke="#222" stroke-width="1"/>
<path d="M547.5 115 V118" stroke="#222" stroke-width="1"/>
<path d="M555.5 115 V118" stroke="#222" stroke-width="1"/>
<path d="M564.5 115 V118" stroke="#222" stroke-width="1"/>
<path d="M572.5 115 V118" stroke="#222" stroke-width="1"/>
<path d="M581.5 113 V118" stroke="#222" stroke-width="1"/>
<path d="M589.5 115 V118" stroke="#222" stroke-width="1"/>
<path d="M597.5 115 V118" stroke="#222" stroke-width="1"/>
<path d="M606.5 115 V118" stroke="#222" stroke-width="1"/>
<path d="M614.5 115 V118" stroke="#222" stroke-width="1"/>
<path d="M623.5 110 V118" stroke="#222" stroke-width="1"/>
<path d="M631.5 115 V118" stroke="#222" stroke-width="1"/>
<path d="M639.5 115 V118" stroke="#222" stroke-width="1"/>
<path d="M648.5 115 V118" stroke="#222" stroke-width="1"/>
<path d="M656.5 115 V118" stroke="#222" stroke-width="1"/>
<path d="M664.5 113 V118" stroke="#222" stroke-width="1"/>
<path d="M673.5 115 V118" stroke="#222" stroke-width="1"/>
<path d="M681.5 115 V118" stroke="#222" stroke-width="1"/>
<path d="M690.5 115 V118" stroke="#222" stroke-width="1"/>
<path d="M698.5 115 V118" stroke="#222" stroke-width="1"/>
<path d="M706.5 110 V118" stroke="#222" stroke-width="1"/>
<path d="M715.5 115 V118" stroke="#222" stroke-width="1"/>
<path d="M723.5 115 V118" stroke="#222" stroke-width="1"/>
<path d="M732.5 115 V118" stroke="#222" stroke-width="1"/>
<path d="M740.5 115 V118" stroke="#222" stroke-width="1"/>
<path d="M748.5 113 V118" stroke="#222" stroke-width="1"/>
<path d="M757.5 115 V118" stroke="#222" stroke-width="1"/>
<path d="M765.5 115 V118" stroke="#222" stroke-width="1"/>
<path d="M774.5 115 V118" stroke="#222" stroke-width="1"/>
<path d="M782.5 115 V118" stroke="#222" stroke-width="1"/>
<path d="M790.5 110 V118" stroke="#222" stroke-width="1"/>
<path d="M799.5 115 V118" stroke="#222" stroke-width="1"/>
<path d="M807.5 115 V118" stroke="#222" stroke-width="1"/>
<path d="M815.5 115 V118" stroke="#222" stroke-width="1"/>
<path d="M824.5 115 V118" stroke="#222" stroke-width="1"/>
<path d="M832.5 113 V118" stroke="#222" stroke-width="1"/>
<path d="M841.5 115 V118" stroke="#222" stroke-width="1"/>
<path d="M849.5 115 V118" stroke="#222" stroke-width="1"/>
<path d="M857.5 115 V118" stroke="#222" stroke-width="1"/>
<path d="M866.5 115 V118" stroke="#222" stroke-width="1"/>
<path d="M874.5 110 V118" stroke="#222" stroke-width="1"/>
<path d="M883.5 115 V118" stroke="#222" stroke-width="1"/>
<path d="M891.5 115 V118" stroke="#222" stroke-width="1"/>
<path d="M899.5 115 V118" stroke="#222" stroke-width="1"/>
<path d="M908.5 115 V118" stroke="#222" stroke-width="1"/>
<path d="M916.5 113 V118" stroke="#222" stroke-width="1"/>
<path d="M925.5 115 V118" stroke="#222" stroke-width="1"/>
<path d="M933.5 115 V118" stroke="#222" stroke-width="1"/>
<path d="M941.5 115 V118" stroke="#222" stroke-width="1"/>
<path d="M950.5 115 V118" stroke="#222" stroke-width="1"/>
<path d="M958.5 110 V118" stroke="#222" stroke-width="1"/>
<path d="M966.5 115 V118" stroke="#222" stroke-width="1"/>
<path d="M975.5 115 V118" stroke="#222" stroke-width="1"/>
<path d="M983.5 115 V118" stroke="#222" stroke-width="1"/>
<path d="M992.5 115 V118" stroke="#222" stroke-width="1"/>
<path d="M1000.5 113 V118" stroke="#222" stroke-width="1"/>
<path d="M1008.5 115 V118" stroke="#222" stroke-width="1"/>
<path d="M1017.5 115 V118" stroke="#222" stroke-width="1"/>
<path d="M1025.5 115 V118" stroke="#222" stroke-width="1"/>
<path d="M1034.5 115 V118" stroke="#222" stroke-width="1"/>
<path d="M1042.5 110 V118" stroke="#222" stroke-width="1"/>
<path d="M1050.5 115 V118" stroke="#222" stroke-width="1"/>
<path d="M1059.5 115 V118" stroke="#222" stroke-width="1"/>
<path d="M1067.5 115 V118" stroke="#222" stroke-width="1"/>
<path d="M1076.5 115 V118" stroke="#222" stroke-width="1"/>
<path d="M1084.5 113 V118" stroke="#222" stroke-width="1"/>
<path d="M1092.5 115 V118" stroke="#222" stroke-width="1"/>
<path d="M1101.5 115 V118" stroke="#222" stroke-width="1"/>
<path d="M1109.5 115 V118" stroke="#222" stroke-width="1"/>
<path d="M1117.5 115 V118" stroke="#222" stroke-width="1"/>
<path d="M1126.5 110 V118" stroke="#222" stroke-width="1"/>
<path d="M1134.5 115 V118" stroke="#222" stroke-width="1"/>
<path d="M1143.5 115 V118" stroke="#222" stroke-width="1"/>
<path d="M1151.5 115 V118" stroke="#222" stroke-width="1"/>
<path d="M1159.5 115 V118" stroke="#222" stroke-width="1"/>
<path d="M1168.5 113 V118" stroke="#222" stroke-width="1"/>
<path d="M1176.5 115 V118" stroke="#222" stroke-width="1"/>
<path d="M1185.5 115 V118" stroke="#222" stroke-width="1"/>
<path d="M1193.5 115 V118" stroke="#222" stroke-width="1"/>
<path d="M1201.5 115 V118" stroke="#222" stroke-width="1"/>
<path d="M1210.5 110 V118" stroke="#222" stroke-width="1"/>
<path d="M1218.5 115 V118" stroke="#222" stroke-width="1"/>
<path d="M1227.5 115 V118" stroke="#222" stroke-width="1"/>
<path d="M1235.5 115 V118" stroke="#222" stroke-width="1"/>
<path d="M1243.5 115 V118" stroke="#222" stroke-width="1"/>
<path d="M1252.5 113 V118" stroke="#222" stroke-width="1"/>
<path d="M1260.5 115 V118" stroke="#222" stroke-width="1"/>
<path d="M1268.5 115 V118" stroke="#222" stroke-width="1"/>
<path d="M1277.5 115 V118" stroke="#222" stroke-width="1"/>
<path d="M1285.5 115 V118" stroke="#222" stroke-width="1"/>
<path d="M1294.5 110 V118" stroke="#222" stroke-width="1"/>
<path d="M1302.5 115 V118" stroke="#222" stroke-width="1"/>
<path d="M1310.5 115 V118" stroke="#222" stroke-width="1"/>
<path d="M1319.5 115 V118" stroke="#222" stroke-width="1"/>
<path d="M1327.5 115 V118" stroke="#222" stroke-width="1"/>
<path d="M1336.5 113 V118" stroke="#222" stroke-width="1"/>
<path d="M1344.5 115 V118" stroke="#222" stroke-width="1"/>
<path d="M1352.5 115 V118" stroke="#222" stroke-width="1"/>
<path d="M1361.5 115 V118" stroke="#222" stroke-width="1"/>
<path d="M1369.5 115 V118" stroke="#222" stroke-width="1"/>
<path d="M1378.5 110 V118" stroke="#222" stroke-width="1"/>
<path d="M1386.5 115 V118" stroke="#222" stroke-width="1"/>
<path d="M1394.5 115 V118" stroke="#222" stroke-width="1"/>
<path d="M1403.5 115 V118" stroke="#222" stroke-width="1"/>
<path d="M1411.5 115 V118" stroke="#222" stroke-width="1"/>
<path d="M1419.5 113 V118" stroke="#222" stroke-width="1"/>
<path d="M1428.5 115 V118" stroke="#222" stroke-width="1"/>
<path d="M1436.5 115 V118" stroke="#222" stroke-width="1"/>
<path d="M1445.5 115 V118" stroke="#222" stroke-width="1"/>
<path d="M1453.5 115 V118" stroke="#222" stroke-width="1"/>
<path d="M1461.5 110 V118" stroke="#222" stroke-width="1"/>
<path d="M1470.5 115 V118" stroke="#222" stroke-width="1"/>
<path d="M1478.5 115 V118" stroke="#222" stroke-width="1"/>
<path d="M1487.5 115 V118" stroke="#222" stroke-width="1"/>
<path d="M1495.5 115 V118" stroke="#222" stroke-width="1"/>
<path d="M1503.5 113 V118" stroke="#222" stroke-width="1"/>
<path d="M1512.5 115 V118" stroke="#222" stroke-width="1"/>
<path d="M1520.5 115 V118" stroke="#222" stroke-width="1"/>
<path d="M1529.5 115 V118" stroke="#222" stroke-width="1"/>
<path d="M1537.5 115 V118" stroke="#222" stroke-width="1"/>
<path d="M1545.5 110 V118" stroke="#222" stroke-width="1"/>
<path d="M367 966.5 H372" stroke="#222" stroke-width="1"/>
<path d="M369 958.5 H372" stroke="#222" stroke-width="1"/>
<path d="M369 950.5 H372" stroke="#222" stroke-width="1"/>
<path d="M369 941.5 H372" stroke="#222" stroke-width="1"/>
<path d="M369 933.5 H372" stroke="#222" stroke-width="1"/>
<path d="M364 924.5 H372" stroke="#222" stroke-width="1"/>
<path d="M369 916.5 H372" stroke="#222" stroke-width="1"/>
<path d="M369 907.5 H372" stroke="#222" stroke-width="1"/>
<path d="M369 899.5 H372" stroke="#222" stroke-width="1"/>
<path d="M369 891.5 H372" stroke="#222" stroke-width="1"/>
<path d="M367 882.5 H372" stroke="#222" stroke-width="1"/>
<path d="M369 874.5 H372" stroke="#222" stroke-width="1"/>
<path d="M369 865.5 H372" stroke="#222" stroke-width="1"/>
<path d="M369 857.5 H372" stroke="#222" stroke-width="1"/>
<path d="M369 849.5 H372" stroke="#222" stroke-width="1"/>
<path d="M364 840.5 H372" stroke="#222" stroke-width="1"/>
<path d="M369 832.5 H372" stroke="#222" stroke-width="1"/>
<path d="M369 823.5 H372" stroke="#222" stroke-width="1"/>
<path d="M369 815.5 H372" stroke="#222" stroke-width="1"/>
<path d="M369 807.5 H372" stroke="#222" stroke-width="1"/>
<path d="M367 798.5 H372" stroke="#222" stroke-width="1"/>
<path d="M369 790.5 H372" stroke="#222" stroke-width="1"/>
<path d="M369 781.5 H372" stroke="#222" stroke-width="1"/>
<path d="M369 773.5 H372" stroke="#222" stroke-width="1"/>
<path d="M369 765.5 H372" stroke="#222" stroke-width="1"/>
<path d="M364 756.5 H372" stroke="#222" stroke-width="1"/>
<path d="M369 748.5 H372" stroke="#222" stroke-width="1"/>
<path d="M369 739.5 H372" stroke="#222" stroke-width="1"/>
<path d="M369 731.5 H372" stroke="#222" stroke-width="1"/>
<path d="M369 723.5 H372" stroke="#222" stroke-width="1"/>
<path d="M367 714.5 H372" stroke="#222" stroke-width="1"/>
<path d="M369 706.5 H372" stroke="#222" stroke-width="1"/>
<path d="M369 697.5 H372" stroke="#222" stroke-width="1"/>
<path d="M369 689.5 H372" stroke="#222" stroke-width="1"/>
<path d="M369 681.5 H372" stroke="#222" stroke-width="1"/>
<path d="M364 672.5 H372" stroke="#222" stroke-width="1"/>
<path d="M369 664.5 H372" stroke="#222" stroke-width="1"/>
<path d="M369 655.5 H372" stroke="#222" stroke-width="1"/>
<path d="M369 647.5 H372" stroke="#222" stroke-width="1"/>
<path d="M369 639.5 H372" stroke="#222" stroke-width="1"/>
<path d="M367 630.5 H372" stroke="#222" stroke-width="1"/>
<path d="M369 622.5 H372" stroke="#222" stroke-width="1"/>
<path d="M369 613.5 H372" stroke="#222" stroke-width="1"/>
<path d="M369 605.5 H372" stroke="#222" stroke-width="1"/>
<path d="M369 597.5 H372" stroke="#222" stroke-width="1"/>
<path d="M364 588.5 H372" stroke="#222" stroke-width="1"/>
<path d="M369 580.5 H372" stroke="#222" stroke-width="1"/>
<path d="M369 571.5 H372" stroke="#222" stroke-width="1"/>
<path d="M369 563.5 H372" stroke="#222" stroke-width="1"/>
<path d="M369 554.5 H372" stroke="#222" stroke-width="1"/>
<path d="M367 546.5 H372" stroke="#222" stroke-width="1"/>
<path d="M369 538.5 H372" stroke="#222" stroke-width="1"/>
<path d="M369 529.5 H372" stroke="#222" stroke-width="1"/>
<path d="M369 521.5 H372" stroke="#222" stroke-width="1"/>
<path d="M369 512.5 H372" stroke="#222" stroke-width="1"/>
<path d="M364 504.5 H372" stroke="#222" stroke-width="1"/>
<path d="M369 496.5 H372" stroke="#222" stroke-width="1"/>
<path d="M369 487.5 H372" stroke="#222" stroke-width="1"/>
<path d="M369 479.5 H372" stroke="#222" stroke-width="1"/>
<path d="M369 470.5 H372" stroke="#222" stroke-width="1"/>
<path d="M367 462.5 H372" stroke="#222" stroke-width="1"/>
<path d="M369 454.5 H372" stroke="#222" stroke-width="1"/>
<path d="M369 445.5 H372" stroke="#222" stroke-width="1"/>
<path d="M369 437.5 H372" stroke="#222" stroke-width="1"/>
<path d="M369 428.5 H372" stroke="#222" stroke-width="1"/>
<path d="M364 420.5 H372" stroke="#222" stroke-width="1"/>
<path d="M369 412.5 H372" stroke="#222" stroke-width="1"/>
<path d="M369 403.5 H372" stroke="#222" stroke-width="1"/>
<path d="M369 395.5 H372" stroke="#222" stroke-width="1"/>
<path d="M369 386.5 H372" stroke="#222" stroke-width="1"/>
<path d="M367 378.5 H372" stroke="#222" stroke-width="1"/>
<path d="M369 370.5 H372" stroke="#222" stroke-width="1"/>
<path d="M369 361.5 H372" stroke="#222" stroke-width="1"/>
<path d="M369 353.5 H372" stroke="#222" stroke-width="1"/>
<path d="M369 344.5 H372" stroke="#222" stroke-width="1"/>
<path d="M364 336.5 H372" stroke="#222" stroke-width="1"/>
<path d="M369 328.5 H372" stroke="#222" stroke-width="1"/>
<path d="M369 319.5 H372" stroke="#222" stroke-width="1"/>
<path d="M369 311.5 H372" stroke="#222" stroke-width="1"/>
<path d="M369 302.5 H372" stroke="#222" stroke-width="1"/>
<path d="M367 294.5 H372" stroke="#222" stroke-width="1"/>
<path d="M369 286.5 H372" stroke="#222" stroke-width="1"/>
<path d="M369 277.5 H372" stroke="#222" stroke-width="1"/>
<path d="M369 269.5 H372" stroke="#222" stroke-width="1"/>
<path d="M369 260.5 H372" stroke="#222" stroke-width="1"/>
<path d="M364 252.5 H372" stroke="#222" stroke-width="1"/>
<path d="M369 243.5 H372" stroke="#222" stroke-width="1"/>
<path d="M369 235.5 H372" stroke="#222" stroke-width="1"/>
<path d="M369 227.5 H372" stroke="#222" stroke-width="1"/>
<path d="M369 218.5 H372" stroke="#222" stroke-width="1"/>
<path d="M367 210.5 H372" stroke="#222" stroke-width="1"/>
<path d="M369 201.5 H372" stroke="#222" stroke-width="1"/>
<path d="M369 193.5 H372" stroke="#222" stroke-width="1"/>
<path d="M369 185.5 H372" stroke="#222" stroke-width="1"/>
<path d="M369 176.5 H372" stroke="#222" stroke-width="1"/>
<path d="M364 168.5 H372" stroke="#222" stroke-width="1"/>
<path d="M369 159.5 H372" stroke="#222" stroke-width="1"/>
<path d="M369 151.5 H372" stroke="#222" stroke-width="1"/>
<path d="M369 143.5 H372" stroke="#222" stroke-width="1"/>
<path d="M369 134.5 H372" stroke="#222" stroke-width="1"/>
<path d="M367 126.5 H372" stroke="#222" stroke-width="1"/>
</svg>
<svg class="abs" style="left:340px;top:90px" width="1240" height="912" viewBox="340 90 1240 912" font-family="Liberation Sans" font-size="13.7" fill="#111">
<text x="454.7" y="107.6" text-anchor="middle">-400</text>
<text x="538.6" y="107.6" text-anchor="middle">-300</text>
<text x="622.5" y="107.6" text-anchor="middle">-200</text>
<text x="706.4" y="107.6" text-anchor="middle">-100</text>
<text x="790.3" y="107.6" text-anchor="middle">0</text>
<text x="874.2" y="107.6" text-anchor="middle">100</text>
<text x="958.1" y="107.6" text-anchor="middle">200</text>
<text x="1042.0" y="107.6" text-anchor="middle">300</text>
<text x="1125.9" y="107.6" text-anchor="middle">400</text>
<text x="1209.8" y="107.6" text-anchor="middle">500</text>
<text x="1293.6" y="107.6" text-anchor="middle">600</text>
<text x="1377.5" y="107.6" text-anchor="middle">700</text>
<text x="1461.4" y="107.6" text-anchor="middle">800</text>
<text transform="translate(361.2 924.3) rotate(-90)" text-anchor="middle">0</text>
<text transform="translate(361.2 840.2) rotate(-90)" text-anchor="middle">100</text>
<text transform="translate(361.2 756.2) rotate(-90)" text-anchor="middle">200</text>
<text transform="translate(361.2 672.1) rotate(-90)" text-anchor="middle">300</text>
<text transform="translate(361.2 588.1) rotate(-90)" text-anchor="middle">400</text>
<text transform="translate(361.2 504.0) rotate(-90)" text-anchor="middle">500</text>
<text transform="translate(361.2 420.0) rotate(-90)" text-anchor="middle">600</text>
<text transform="translate(361.2 335.9) rotate(-90)" text-anchor="middle">700</text>
<text transform="translate(361.2 251.9) rotate(-90)" text-anchor="middle">800</text>
<text transform="translate(361.2 167.8) rotate(-90)" text-anchor="middle">900</text>
<path d="M1469.500 96 V118" stroke="#222" stroke-width="1.200"/>
<path d="M348 293.500 H372" stroke="#222" stroke-width="1.200"/>
<text x="1496" y="107" font-size="10.5" fill="#111" textLength="52" lengthAdjust="spacingAndGlyphs">millimetres</text>
<g stroke="#9a9a9a" stroke-width="1" stroke-dasharray="1 1.500"><path d="M351 106.500 H368"/><path d="M357.500 99 V114"/><path d="M362.500 99 V114"/></g>
</svg>
<div class="abs" style="left:1550px;top:93px;width:22px;height:26px;background:#f0f0f0;border-left:1px solid #fff;border-top:1px solid #fff;border-right:2px solid #7d7d7d;border-bottom:2px solid #7d7d7d"></div>
<svg class="abs" style="left:1552px;top:98px" width="18" height="16" viewBox="0 0 18 16"><path d="M4 3.500h3M10 3.500h3" stroke="#111" stroke-width="1.500"/><path d="M3.500 6.500h10.500l-5.250 5.500z" fill="#111"/></svg>
<div class="abs" style="left:347px;top:976px;width:25px;height:21px;background:#f0f0f0;border-top:1px solid #8a8a8a;border-right:2px solid #8a8a8a;border-bottom:2px solid #8a8a8a"></div>
<svg class="abs" style="left:351px;top:979px" width="16" height="14" viewBox="0 0 16 14"><path d="M4.200 2.200v3.300M4.200 8v3.300" stroke="#111" stroke-width="1.600"/><path d="M7 1.800v10.400l6-5.200z" fill="#111"/></svg>
<div class="abs" style="left:393px;top:986px;width:1135px;height:2px;background:#8e8e8e"></div>
<div class="abs" style="left:1561px;top:140px;width:2px;height:814px;background:#8e8e8e"></div>
<div class="abs" style="left:345px;top:999px;width:1232px;height:2px;background:#fbfbfb"></div>
<div class="abs" style="left:345px;top:1002px;width:1232px;height:1px;background:#c4c4c4"></div>
<div class="abs" style="left:346px;top:1003px;width:1px;height:51px;background:#a8a8a8"></div>
<div class="abs" style="left:1551px;top:1004px;width:1px;height:50px;background:#fbfbfb"></div>
<div class="abs" style="left:373px;top:1024px;width:31px;height:25px;background:#000"></div>
<div class="abs" style="left:353px;top:1009px;width:32px;height:25px;background:#fff;border:1px solid #555;box-shadow:1px 1px 0 #ddd"></div>
<svg class="abs" style="left:388px;top:1008px" width="18" height="14" viewBox="0 0 18 14"><rect x="1.500" y="2" width="8" height="6" rx="2.500" fill="none" stroke="#222" stroke-width="1.300"/><rect x="6.500" y="5.500" width="8" height="6" rx="2.500" fill="none" stroke="#222" stroke-width="1.300"/></svg>
<div class="abs" style="left:417px;top:1010px;width:38px;height:38px;background:#ffffff;border:1px solid #555;border-radius:1px;box-shadow:1px 1px 0 #bbb"></div>
<div class="abs" style="left:462px;top:1010px;width:38px;height:38px;background:#000000;border:1px solid #222;border-radius:1px;box-shadow:1px 1px 0 #bbb"></div>
<div class="abs" style="left:507px;top:1010px;width:38px;height:38px;background:#00ffff;border:1px solid #222;border-radius:1px;box-shadow:1px 1px 0 #bbb"></div>
<div class="abs" style="left:552px;top:1010px;width:38px;height:38px;background:#3344dd;border:1px solid #222;border-radius:1px;box-shadow:1px 1px 0 #bbb"></div>
<div class="abs" style="left:597px;top:1010px;width:38px;height:38px;background:#55bb55;border:1px solid #222;border-radius:1px;box-shadow:1px 1px 0 #bbb"></div>
<div class="abs" style="left:642px;top:1010px;width:38px;height:38px;background:#dd1122;border:1px solid #222;border-radius:1px;box-shadow:1px 1px 0 #bbb"></div>
<div class="abs" style="left:687px;top:1010px;width:38px;height:38px;background:#aa22dd;border:1px solid #222;border-radius:1px;box-shadow:1px 1px 0 #bbb"></div>
<div class="abs" style="left:732px;top:1010px;width:38px;height:38px;background:#ffff80;border:1px solid #222;border-radius:1px;box-shadow:1px 1px 0 #bbb"></div>
<div class="abs" style="left:777px;top:1010px;width:38px;height:38px;background:#b0a035;border:1px solid #222;border-radius:1px;box-shadow:1px 1px 0 #bbb"></div>
<div class="abs" style="left:822px;top:1010px;width:38px;height:38px;background:#ffcc11;border:1px solid #222;border-radius:1px;box-shadow:1px 1px 0 #bbb"></div>
<div class="abs" style="left:867px;top:1010px;width:38px;height:38px;background:#060606;border:1px solid #222;border-radius:1px;box-shadow:1px 1px 0 #bbb"></div>
<div class="abs" style="left:912px;top:1010px;width:38px;height:38px;background:#060606;border:1px solid #222;border-radius:1px;box-shadow:1px 1px 0 #bbb"></div>
<div class="abs" style="left:957px;top:1010px;width:38px;height:38px;background:#060606;border:1px solid #222;border-radius:1px;box-shadow:1px 1px 0 #bbb"></div>
<div class="abs" style="left:1002px;top:1010px;width:38px;height:38px;background:#060606;border:1px solid #222;border-radius:1px;box-shadow:1px 1px 0 #bbb"></div>
<div class="abs" style="left:1047px;top:1010px;width:38px;height:38px;background:#060606;border:1px solid #222;border-radius:1px;box-shadow:1px 1px 0 #bbb"></div>
<div class="abs" style="left:1092px;top:1010px;width:38px;height:38px;background:#060606;border:1px solid #222;border-radius:1px;box-shadow:1px 1px 0 #bbb"></div>
<div class="abs" style="left:1137px;top:1010px;width:38px;height:38px;background:#060606;border:1px solid #222;border-radius:1px;box-shadow:1px 1px 0 #bbb"></div>
<div class="abs" style="left:1182px;top:1010px;width:38px;height:38px;background:#060606;border:1px solid #222;border-radius:1px;box-shadow:1px 1px 0 #bbb"></div>
<div class="abs" style="left:1227px;top:1010px;width:38px;height:38px;background:#060606;border:1px solid #222;border-radius:1px;box-shadow:1px 1px 0 #bbb"></div>
<div class="abs" style="left:1272px;top:1010px;width:38px;height:38px;background:#060606;border:1px solid #222;border-radius:1px;box-shadow:1px 1px 0 #bbb"></div>
<div class="abs" style="left:1317px;top:1010px;width:38px;height:38px;background:#060606;border:1px solid #222;border-radius:1px;box-shadow:1px 1px 0 #bbb"></div>
<div class="abs" style="left:1362px;top:1010px;width:38px;height:38px;background:#060606;border:1px solid #222;border-radius:1px;box-shadow:1px 1px 0 #bbb"></div>
<div class="abs" style="left:1407px;top:1010px;width:38px;height:38px;background:#060606;border:1px solid #222;border-radius:1px;box-shadow:1px 1px 0 #bbb"></div>
<div class="abs" style="left:1452px;top:1010px;width:38px;height:38px;background:#060606;border:1px solid #222;border-radius:1px;box-shadow:1px 1px 0 #bbb"></div>
<div class="abs" style="left:1497px;top:1010px;width:38px;height:38px;background:#060606;border:1px solid #222;border-radius:1px;box-shadow:1px 1px 0 #bbb"></div>
<div class="abs" style="left:0;top:1054px;width:1920px;height:26px;background:#f0f0f0"></div>
<div class="abs" style="left:1491px;top:1059px;width:82px;height:21px;border-left:1px solid #a5a5a5;border-top:1px solid #a5a5a5;border-right:1px solid #fff;font-size:13.300px;line-height:19px;color:#243246;padding-left:3px;white-space:nowrap;overflow:hidden">X: 807.143</div>
<div class="abs" style="left:1577px;top:1059px;width:83px;height:21px;border-left:1px solid #a5a5a5;border-top:1px solid #a5a5a5;border-right:1px solid #fff;font-size:13.300px;line-height:19px;color:#243246;padding-left:3px;white-space:nowrap;overflow:hidden">Y: 752.679</div>
<div class="abs" style="left:1663px;top:1059px;width:78px;height:21px;border-left:1px solid #a5a5a5;border-top:1px solid #a5a5a5;border-right:1px solid #fff;font-size:13.300px;line-height:19px;color:#243246;padding-left:3px;white-space:nowrap;overflow:hidden"></div>
<div class="abs" style="left:1742px;top:1059px;width:88px;height:21px;border-left:1px solid #a5a5a5;border-top:1px solid #a5a5a5;border-right:1px solid #fff;font-size:13.300px;line-height:19px;color:#243246;padding-left:3px;white-space:nowrap;overflow:hidden"></div>
<div class="abs" style="left:1833px;top:1059px;width:87px;height:21px;border-left:1px solid #a5a5a5;border-top:1px solid #a5a5a5;border-right:1px solid #fff;font-size:13.300px;line-height:19px;color:#243246;padding-left:3px;white-space:nowrap;overflow:hidden"></div>
<svg class="abs" style="left:345px;top:56px" width="460" height="36" viewBox="345 56 460 36">
<defs>
 <radialGradient id="gLens" cx="0.400" cy="0.350" r="0.800"><stop offset="0" stop-color="#eef8ff"/><stop offset="1" stop-color="#b4d8f2"/></radialGradient>
 <filter id="tb" x="-20%" y="-20%" width="140%" height="140%"><feGaussianBlur stdDeviation="0.450"/></filter>
 <g id="mag"><circle cx="0" cy="0" r="7.500" fill="url(#gLens)" stroke="#7386a6" stroke-width="1.600"/><path d="M5.500 5.500 L9 8.500" stroke="#8a92a8" stroke-width="2"/><ellipse cx="9" cy="8" rx="2.600" ry="2" fill="#e89a4a"/></g>
</defs>
<text x="355" y="78.500" font-family="Liberation Sans" font-weight="700" font-size="19" fill="#0a0a0a" stroke="#0a0a0a" stroke-width="0.600" textLength="20.500" lengthAdjust="spacingAndGlyphs">3D</text>
<g filter="url(#tb)">
 <g transform="translate(393.500 71.500)"><use href="#mag"/><path d="M-4.500 0H4.500M0 -4.500V4.500" stroke="#3c5a8a" stroke-width="1.800"/></g>
 <g transform="translate(422.500 71.500)"><use href="#mag"/><path d="M-4.500 0H4.500" stroke="#3c5a8a" stroke-width="1.800"/></g>
 <g transform="translate(451.500 71.500)"><use href="#mag"/><path d="M3 3.500 C6 -1 3 -5 -1 -4.500 C-4 -4 -5 -1 -4 1" fill="none" stroke="#9a8a1a" stroke-width="2"/><path d="M-6.500 -1 L-3.500 3.500 L-1 -0.500Z" fill="#9a8a1a"/></g>
 <g transform="translate(490 71.500)"><use href="#mag"/><rect x="-5" y="-3" width="10" height="6" fill="#dfeefa" stroke="#6a7a9a" stroke-width="0.800"/><path d="M-3 -1.500v3.500M3 -1.500v3.500M0 -1v0.800M0 1v0.800" stroke="#4a5a7a" stroke-width="1.100"/></g>
 <g transform="translate(518.500 71.500)"><use href="#mag"/><rect x="-4.500" y="-3.500" width="9" height="7" fill="none" stroke="#44608c" stroke-width="1.700"/></g>
 <g transform="translate(547 72.500)" fill="#9c9c9c"><circle cx="-1" cy="-1" r="8"/><circle cx="5" cy="3" r="4.500"/><path d="M3 4 L10 9.500 L11 6 L8 3Z"/><rect x="6" y="7" width="6" height="3.500" rx="1"/></g>
 <g transform="translate(645 72.500)"><path d="M-12 0 L-3 -6 V6Z" fill="#4a4ab0"/><path d="M-5 -4 C0 -8 8 -6 9 -1 C8 3 2 5 -5 4Z" fill="#b9c8ea" stroke="#7a8ab8" stroke-width="1"/><path d="M5 3 L10 8" stroke="#c89a6a" stroke-width="2.200"/></g>
</g>
<path d="M471.500 62.500V84.500M567.500 62.500V84.500M664.500 62.500V84.500" stroke="#a6a6a6" stroke-width="1.400"/>
<!-- pressed buttons -->
<rect x="574.500" y="60.500" width="27" height="27" fill="#f9f9f9" stroke="#e6e6e6"/><path d="M574.500 87.500V60.500H601.500" fill="none" stroke="#adadad"/>
<rect x="602.500" y="60.500" width="27" height="27" fill="#f9f9f9" stroke="#e6e6e6"/><path d="M602.500 87.500V60.500H629.500" fill="none" stroke="#adadad"/>
<g filter="url(#tb)">
 <g stroke="#333" stroke-width="1.100" stroke-dasharray="2 1.200"><path d="M583 66.500h8M583 70h5M583 78h5M583 81.500h8"/></g><path d="M589 65V83" stroke="#8a8a8a" stroke-width="1"/>
 <path d="M584.500 74 L590 68.500 V71.500 H598 V76.500 H590 V79.500Z" fill="#4a4a4a" stroke="#111" stroke-width="0.800"/>
 <g stroke="#333" stroke-width="1.100" stroke-dasharray="2 1.200"><path d="M618 66.500h8M621 70h5M621 78h5M618 81.500h8"/></g><path d="M626.500 65V83" stroke="#8a8a8a" stroke-width="1"/>
 <path d="M622.500 74 L617 68.500 V71.500 H609 V76.500 H617 V79.500Z" fill="#4a4a4a" stroke="#111" stroke-width="0.800"/>
</g>
<!-- slider -->
<path d="M680 74.300H772" stroke="#8a8a8a" stroke-width="1.800"/><path d="M680 75.800H772" stroke="#fdfdfd" stroke-width="1"/>
<path d="M774.500 63.500H784.500V81L779.500 86.500L774.500 81Z" fill="#f4f4f4" stroke="#fff" stroke-width="1"/><path d="M784.500 63V81L779.500 86.500" fill="none" stroke="#7a7a7a" stroke-width="1.600"/>
</svg>
<svg class="abs" style="left:790px;top:168px" width="337" height="758" viewBox="790 168 337 758">
<defs>
 <filter id="s2" filterUnits="userSpaceOnUse" x="780" y="160" width="360" height="780"><feGaussianBlur stdDeviation="2" result="b"/><feComposite in="b" in2="SourceAlpha" operator="in"/></filter>
 <filter id="s4" filterUnits="userSpaceOnUse" x="780" y="160" width="360" height="780"><feGaussianBlur stdDeviation="4" result="b"/><feComposite in="b" in2="SourceAlpha" operator="in"/></filter>
 <filter id="s7" filterUnits="userSpaceOnUse" x="780" y="160" width="360" height="780"><feGaussianBlur stdDeviation="7" result="b"/><feComposite in="b" in2="SourceAlpha" operator="in"/></filter>
 <filter id="b1" filterUnits="userSpaceOnUse" x="780" y="160" width="360" height="780"><feGaussianBlur stdDeviation="1"/></filter>
 <filter id="b2" filterUnits="userSpaceOnUse" x="780" y="160" width="360" height="780"><feGaussianBlur stdDeviation="2"/></filter>
 <filter id="b3" filterUnits="userSpaceOnUse" x="780" y="160" width="360" height="780"><feGaussianBlur stdDeviation="3.500"/></filter>
 <filter id="b6" filterUnits="userSpaceOnUse" x="780" y="160" width="360" height="780"><feGaussianBlur stdDeviation="6"/></filter>
 <clipPath id="cSkirt"><path d="M886 456 C880 500 866 570 858 610 C851 650 842 675 838 690 C840 700 846 708 856 713 C866 720 876 722 886 718 C900 712 915 708 930 710 C945 712 955 716 968 716 C985 718 1000 708 1014 711 C1024 716 1030 722 1040 720 C1052 716 1062 708 1072 711 C1082 716 1092 708 1098 700 C1106 694 1112 684 1110 674 C1106 664 1098 660 1088 655 C1070 645 1052 622 1036 590 C1022 560 1012 530 1003 498 C990 480 940 470 886 456Z"/></clipPath>
 <clipPath id="cSashL"><path d="M908 301 C890 312 868 328 851 343 C848 358 850 372 853 384 C860 408 872 436 886 458 C900 482 918 502 940 520 C952 528 962 533 970 533 C982 522 996 504 1008 486 C1018 470 1026 458 1030 446 C1026 440 1020 440 1013 444 C1000 458 985 472 968 482 C950 488 934 478 926 462 C916 436 908 400 905 362 C904 340 906 320 908 301Z"/></clipPath>
 <clipPath id="cSashR"><path d="M1030 422 C1040 414 1052 412 1062 416 C1078 424 1090 438 1097 456 C1103 476 1105 500 1105 525 C1105 545 1105 560 1104 574 C1096 572 1090 566 1084 560 C1078 556 1074 556 1070 552 C1070 530 1072 505 1072 485 C1072 465 1068 448 1058 438 C1050 430 1040 428 1030 422Z"/></clipPath>
 <clipPath id="cArmL"><path d="M853 372 C846 400 838 430 828 458 C818 485 810 515 808 548 L840 552 C848 528 860 505 872 482 C882 465 888 448 880 430 C872 410 862 390 853 372Z"/></clipPath>
 <clipPath id="cTorso"><path d="M903 298 C930 294 970 294 1000 300 C1000 330 1004 356 1014 379 C1006 395 1000 416 996 442 C990 462 980 476 968 486 L930 490 C918 470 910 430 904 380 C902 350 902 320 903 298Z"/></clipPath>
 <clipPath id="cArmR"><path d="M990 304 C1002 296 1018 300 1028 312 C1042 330 1054 350 1068 370 C1082 388 1096 404 1099 420 C1101 432 1096 440 1090 442 L1046 416 C1034 404 1022 392 1013 380 C1004 360 996 336 990 304Z"/></clipPath>
 <linearGradient id="gSkirt" gradientUnits="userSpaceOnUse" x1="850" y1="0" x2="1100" y2="0"><stop offset="0" stop-color="#b8b8b8"/><stop offset="0.160" stop-color="#909090"/><stop offset="0.400" stop-color="#6e6e6e"/><stop offset="0.700" stop-color="#848484"/><stop offset="1" stop-color="#bcbcbc"/></linearGradient>
 <linearGradient id="gScab" gradientUnits="userSpaceOnUse" x1="0" y1="515" x2="0" y2="842"><stop offset="0" stop-color="#444"/><stop offset="0.300" stop-color="#2c2c2c"/><stop offset="0.700" stop-color="#262626"/><stop offset="1" stop-color="#121212"/></linearGradient>
</defs>
<rect x="790" y="168" width="337" height="758" fill="#000"/>
<!-- sword blade / scabbard -->
<path d="M1031 517 L1051 517 C1053 560 1056 640 1057 720 C1058 770 1056 820 1050 842 L1044 842 C1040 800 1040 760 1040 720 C1038 650 1034 570 1031 517Z" fill="url(#gScab)" filter="url(#b1)"/>
<!-- back leg -->
<g filter="url(#s4)"><path d="M890 716 C900 745 918 770 934 790 L968 778 C958 758 948 735 944 712Z" fill="#9a9a9a"/></g>
<!-- back shoe -->
<g filter="url(#s2)"><path d="M966 772 C974 778 978 788 976 796 C974 806 968 812 964 820 C956 828 942 832 932 830 C926 826 926 812 930 802 C934 794 940 788 946 786 C954 786 962 780 966 772Z" fill="#a8a8a8"/></g>
<path d="M931 804 C930 815 936 820 946 818 C956 818 964 812 968 802" fill="none" stroke="#c4c4c4" stroke-width="2.500" filter="url(#b1)"/>
<path d="M946 788 C950 796 960 794 966 784" fill="none" stroke="#7a7a7a" stroke-width="2" filter="url(#b1)"/>
<!-- front leg -->
<g filter="url(#s4)"><path d="M977 712 C978 740 980 770 986 800 C990 825 994 845 996 864 L1024 864 C1023 840 1022 815 1024 795 C1028 770 1032 745 1028 712Z" fill="#aaaaaa"/></g>
<ellipse cx="1004" cy="755" rx="10" ry="22" fill="#c6c6c6" filter="url(#b6)"/>
<!-- front shoe -->
<g filter="url(#s2)"><path d="M994 862 C1000 856 1018 856 1030 860 C1034 872 1034 888 1032 898 C1022 902 1006 902 996 898 C990 888 990 872 994 862Z" fill="#d2d2d2"/></g>
<path d="M996 866 C998 858 1022 858 1027 864 C1028 874 1024 880 1018 882 L1013 876 L1008 884 C1000 882 996 874 996 866Z" fill="#9c9c9c" filter="url(#b1)"/>
<!-- skirt -->
<g filter="url(#s2)"><path d="M886 456 C880 500 866 570 858 610 C851 650 842 675 838 690 C840 700 846 708 856 713 C866 720 876 722 886 718 C900 712 915 708 930 710 C945 712 955 716 968 716 C985 718 1000 708 1014 711 C1024 716 1030 722 1040 720 C1052 716 1062 708 1072 711 C1082 716 1092 708 1098 700 C1106 694 1112 684 1110 674 C1106 664 1098 660 1088 655 C1070 645 1052 622 1036 590 C1022 560 1012 530 1003 498 C990 480 940 470 886 456Z" fill="url(#gSkirt)"/></g>
<g clip-path="url(#cSkirt)">
 <path d="M872 520 C864 580 852 650 846 700" fill="none" stroke="#bebebe" stroke-width="10" filter="url(#b6)"/>
 <path d="M900 500 C894 570 884 640 872 715" fill="none" stroke="#8e8e8e" stroke-width="8" filter="url(#b3)"/>
 <path d="M922 528 C916 590 906 650 896 712" fill="none" stroke="#5e5e5e" stroke-width="4" filter="url(#b2)"/>
 <path d="M930 530 C925 590 916 650 906 712" fill="none" stroke="#a6a6a6" stroke-width="6" filter="url(#b3)"/>
 <path d="M946 536 C944 590 940 650 938 712" fill="none" stroke="#5c5c5c" stroke-width="4" filter="url(#b2)"/>
 <path d="M955 538 C953 590 950 650 950 712" fill="none" stroke="#a2a2a2" stroke-width="6" filter="url(#b3)"/>
 <path d="M967 536 C972 600 982 660 996 712" fill="none" stroke="#5e5e5e" stroke-width="4" filter="url(#b2)"/>
 <path d="M976 534 C982 600 994 660 1010 712" fill="none" stroke="#a4a4a4" stroke-width="6" filter="url(#b3)"/>
 <path d="M990 520 C1004 580 1028 640 1058 690" fill="none" stroke="#646464" stroke-width="4" filter="url(#b2)"/>
 <path d="M998 516 C1014 576 1040 634 1072 682" fill="none" stroke="#acacac" stroke-width="7" filter="url(#b3)"/>
 <path d="M1004 506 C1016 560 1050 620 1100 668" fill="none" stroke="#b8b8b8" stroke-width="6" filter="url(#b3)"/>
 <ellipse cx="1092" cy="688" rx="20" ry="16" fill="#e4e4e4" filter="url(#b6)"/>
 <path d="M846 676 C880 700 960 700 1020 700 C1050 700 1080 690 1100 672" fill="none" stroke="#b4b4b4" stroke-width="14" opacity="0.500" filter="url(#b6)"/>
 <path d="M840 694 C850 708 870 716 886 712 C900 706 915 702 930 704 C945 706 955 710 968 710 C985 712 1000 702 1014 705 C1024 710 1030 716 1040 714 C1052 710 1062 702 1072 705 C1082 710 1092 702 1098 694" fill="none" stroke="#d2d2d2" stroke-width="4.500" filter="url(#b1)"/>
 <path d="M1100 664 C1094 672 1096 684 1104 690" fill="none" stroke="#8a8a8a" stroke-width="2" filter="url(#b1)"/>
</g>
<!-- torso -->
<g filter="url(#s2)"><path d="M903 298 C930 294 970 294 1000 300 C1000 330 1004 356 1014 379 C1006 395 1000 416 996 442 C990 462 980 476 968 486 L930 490 C918 470 910 430 904 380 C902 350 902 320 903 298Z" fill="#a0a0a0"/></g>
<g clip-path="url(#cTorso)">
<path d="M962 400 C975 420 990 440 1000 450" fill="none" stroke="#c4c4c4" stroke-width="3" filter="url(#b2)"/>
<path d="M958 405 C965 430 975 455 985 470" fill="none" stroke="#bebebe" stroke-width="3" filter="url(#b2)"/>
<path d="M940 330 C925 380 922 430 928 480" fill="none" stroke="#b2b2b2" stroke-width="14" filter="url(#b6)"/>
<path d="M975 320 C990 370 1000 420 1000 470" fill="none" stroke="#aaaaaa" stroke-width="12" filter="url(#b6)"/>
<!-- necklaces -->
<g fill="none" stroke="#c2c2c2" stroke-width="1.200" filter="url(#b1)" opacity="0.850">
 <path d="M910 306 C908 350 918 390 940 398 C962 396 972 350 976 306"/>
 <path d="M914 306 C914 360 926 410 944 418 C966 410 978 350 982 306"/>
 <path d="M906 352 C925 338 950 322 972 306"/>
 <path d="M944 398 C960 420 985 445 1005 458"/><path d="M944 398 C935 430 930 455 930 475"/>
</g>
</g>
<!-- collar -->
<path d="M917 290 C920 304 932 314 946 314 C960 314 970 304 972 290 C960 300 935 300 917 290Z" fill="#3c3c3c" filter="url(#b1)"/>
<path d="M920 296 C930 308 960 308 970 296" fill="none" stroke="#555" stroke-width="5" filter="url(#b2)"/>
<!-- left arm (viewer left) -->
<g filter="url(#s4)"><path d="M853 372 C846 400 838 430 828 458 C818 485 810 515 808 548 L840 552 C848 528 860 505 872 482 C882 465 888 448 880 430 C872 410 862 390 853 372Z" fill="#b2b2b2"/></g>
<g clip-path="url(#cArmL)"><path d="M848 420 C838 460 830 500 824 540" fill="none" stroke="#cacaca" stroke-width="9" filter="url(#b6)"/></g>
<!-- cuff + hand -->
<g filter="url(#s2)"><path d="M808 546 L840 550 L838 562 L809 560Z" fill="#b4b4b4"/>
<path d="M811 560 C809 578 811 598 815 610 C817 616 820 618 823 618 C826 622 830 623 833 622 C836 626 840 628 843 627 C847 622 846 612 845 604 C848 596 848 584 844 574 C842 568 840 564 838 562Z" fill="#a8a8a8"/></g>
<!-- right arm (viewer right) -->
<g filter="url(#s4)"><path d="M990 304 C1002 296 1018 300 1028 312 C1042 330 1054 350 1068 370 C1082 388 1096 404 1099 420 C1101 432 1096 440 1090 442 L1046 416 C1034 404 1022 392 1013 380 C1004 360 996 336 990 304Z" fill="#b0b0b0"/></g>
<g clip-path="url(#cArmR)"><ellipse cx="1016" cy="335" rx="20" ry="34" fill="#868686" opacity="0.700" filter="url(#b6)" transform="rotate(-30 1016 335)"/><ellipse cx="1082" cy="412" rx="14" ry="18" fill="#c6c6c6" opacity="0.800" filter="url(#b6)"/></g>
<!-- sash left -->
<g filter="url(#s2)"><path d="M908 301 C890 312 868 328 851 343 C848 358 850 372 853 384 C860 408 872 436 886 458 C900 482 918 502 940 520 C952 528 962 533 970 533 C982 522 996 504 1008 486 C1018 470 1026 458 1030 446 C1026 440 1020 440 1013 444 C1000 458 985 472 968 482 C950 488 934 478 926 462 C916 436 908 400 905 362 C904 340 906 320 908 301Z" fill="#c8c8c8"/></g>
<g clip-path="url(#cSashL)">
 <path d="M866 340 C864 380 880 430 910 480" fill="none" stroke="#f4f4f4" stroke-width="9" filter="url(#b3)"/>
 <path d="M896 318 C890 370 900 430 930 490" fill="none" stroke="#aaaaaa" stroke-width="7" filter="url(#b3)"/>
 <path d="M930 500 C955 512 985 490 1020 450" fill="none" stroke="#e8e8e8" stroke-width="12" filter="url(#b6)"/>
 <path d="M935 482 C960 496 990 470 1015 446" fill="none" stroke="#b4b4b4" stroke-width="5" filter="url(#b3)"/>
</g>
<!-- right hand -->
<g filter="url(#s2)"><path d="M1014 440 C1018 430 1030 424 1044 424 C1058 424 1068 432 1070 444 C1070 454 1062 460 1052 458 L1040 456 L1036 462 L1030 458 L1026 450 L1018 448Z" fill="#cecece"/></g>
<!-- sword hilt -->
<path d="M1031 466 L1041 466 L1043 508 L1032 508Z" fill="#6a6a6a" filter="url(#b1)"/>
<g stroke="#8c8c8c" stroke-width="1.500" filter="url(#b1)"><path d="M1031 474l11-4M1031 481l11-4M1032 488l11-4M1032 495l11-4M1032 502l11-4"/></g>
<path d="M1022 508 H1068 V518 H1022Z" fill="#505050" filter="url(#b1)"/>
<path d="M1048 472 C1058 466 1066 474 1064 486 C1062 496 1056 500 1060 508" fill="none" stroke="#5c5c5c" stroke-width="3" filter="url(#b1)"/>
<!-- sash right -->
<g filter="url(#s2)"><path d="M1030 422 C1040 414 1052 412 1062 416 C1078 424 1090 438 1097 456 C1103 476 1105 500 1105 525 C1105 545 1105 560 1104 574 C1096 572 1090 566 1084 560 C1078 556 1074 556 1070 552 C1070 530 1072 505 1072 485 C1072 465 1068 448 1058 438 C1050 430 1040 428 1030 422Z" fill="#c4c4c4"/></g>
<g clip-path="url(#cSashR)">
 <path d="M1040 420 C1070 424 1086 450 1088 500 L1086 570" fill="none" stroke="#f2f2f2" stroke-width="6" filter="url(#b2)"/>
 <path d="M1076 470 L1076 560" fill="none" stroke="#9a9a9a" stroke-width="4" filter="url(#b2)"/>
 <path d="M1100 470 L1102 570" fill="none" stroke="#8a8a8a" stroke-width="4" filter="url(#b2)"/>
</g>
<!-- head: hair back, tail, plume -->
<g filter="url(#s2)">
 <path d="M906 256 C903 270 908 284 918 293 C924 297 932 296 934 292 L924 258Z" fill="#747474"/>
 <path d="M901 226 C898 238 895 252 892 263 L903 265 C905 252 907 240 909 228Z" fill="#808080"/>
 <path d="M909 215 C905 206 900 203 896 206 C894 212 892 215 887 214 C881 209 881 199 887 193 C894 187 905 187 911 195 C914 202 913 209 909 215Z" fill="#707070"/>
</g>
<path d="M888 211 C886 205 888 199 893 196 M893 208 C892 204 894 200 898 198" fill="none" stroke="#5c5c5c" stroke-width="1.500" filter="url(#b1)"/>
<!-- turban -->
<g filter="url(#s2)"><path d="M900 236 C898 216 908 198 930 194 C950 190 968 196 973 212 C976 228 975 244 973 254 C966 234 946 224 930 230 C920 236 914 248 913 260 C906 254 902 246 900 236Z" fill="#8a8a8a"/></g>
<path d="M906 240 C912 216 942 204 970 218" fill="none" stroke="#a4a4a4" stroke-width="6" filter="url(#b2)"/>
<path d="M904 230 C912 206 944 196 972 208" fill="none" stroke="#7a7a7a" stroke-width="2.500" filter="url(#b2)"/>
<!-- face -->
<g filter="url(#s2)"><path d="M915 256 C914 238 924 223 944 221 C962 219 973 231 975 248 C976 264 974 278 968 288 C960 298 948 300 940 296 C928 290 918 278 915 256Z" fill="#a8a8a8"/></g>
<ellipse cx="944" cy="252" rx="20" ry="18" fill="#c4c4c4" opacity="0.650" filter="url(#b6)"/>
<path d="M916 260 C919 282 932 297 946 298 C960 298 970 288 974 266 C968 276 960 281 951 279 C940 281 926 274 916 260Z" fill="#8a8a8a" filter="url(#b2)"/>
<path d="M968 232 C974 246 975 262 972 276" fill="none" stroke="#8e8e8e" stroke-width="4" filter="url(#b2)"/>
<ellipse cx="951" cy="254" rx="4" ry="8.500" fill="#f8f8f8" filter="url(#b2)"/>
<ellipse cx="938" cy="248" rx="4.500" ry="2.800" fill="#d6d6d6" filter="url(#b1)"/><ellipse cx="962" cy="245" rx="4" ry="2.800" fill="#d6d6d6" filter="url(#b1)"/>
<path d="M925 241 C931 234 940 234 945 240" fill="none" stroke="#cecece" stroke-width="1.800" filter="url(#b1)"/><path d="M956 238 C960 233 967 233 971 238" fill="none" stroke="#cecece" stroke-width="1.800" filter="url(#b1)"/>
<path d="M934 269 C938 274 944 270 950 267 C956 266 960 270 965 268 C968 267 970 264 971 262" fill="none" stroke="#e8e8e8" stroke-width="2.600" filter="url(#b1)"/>
<path d="M945 272 C949 274 955 274 958 272" fill="none" stroke="#c8c8c8" stroke-width="1.800" filter="url(#b1)"/>
<ellipse cx="909" cy="258" rx="3" ry="6.500" fill="#929292" filter="url(#b1)"/>
<rect x="973" y="258" width="4" height="5" fill="#9a9a9a" filter="url(#b1)"/>
<!-- right-hand fingers -->
<g fill="none" stroke="#8a8a8a" stroke-width="1.300" filter="url(#b1)"><path d="M1020 446 C1024 442 1030 442 1034 446M1026 452 C1030 448 1036 448 1040 452M1034 458 C1038 452 1046 452 1050 456"/></g>
<!-- left-hand fingers -->
<g fill="none" stroke="#6c6c6c" stroke-width="1.300" filter="url(#b1)"><path d="M818 596 L820 614M824 598 L826 618M831 600 L833 621M838 584 L840 606"/></g>
</svg>
<!-- right splitter -->
<div class="abs" style="left:1577px;top:55px;width:2px;height:1000px;background:#a9a9a9"></div>
<div class="abs" style="left:1579px;top:55px;width:2px;height:1000px;background:#fbfbfb"></div>
<!-- MDI child buttons -->
<svg class="abs" style="left:1845px;top:30px" width="75" height="24" viewBox="0 0 75 24">
 <rect x="0.500" y="1.500" width="24" height="21" fill="#fff" stroke="#ececec"/><rect x="25.500" y="1.500" width="24" height="21" fill="#fff" stroke="#ececec"/><rect x="50.500" y="1.500" width="24" height="21" fill="#fff" stroke="#ececec"/>
 <path d="M9 15.500h8" stroke="#7a7a7a" stroke-width="2"/>
 <path d="M36 10.500V7.500h6.500v5H41" fill="none" stroke="#7a7a7a" stroke-width="1.500"/><rect x="33.500" y="11" width="7" height="5" fill="#fff" stroke="#7a7a7a" stroke-width="1.500"/>
 <path d="M58.500 8.500l7 7M65.500 8.500l-7 7" stroke="#7a7a7a" stroke-width="2"/>
</svg>
<div class="rh" style="top:56px"><b>Vectors</b><i class="btn" style="right:7px;top:1px;background:#b9c2d0;border-top-color:#e8ecf2;border-left-color:#e8ecf2;border-right-color:#6f7f99;border-bottom-color:#6f7f99"><s class="tri-dn" style="border-top-color:#2b3340"></s></i></div>
<div class="rh" style="top:95px"><b>Bitmaps</b><i class="btn" style="right:7px;top:1px;background:#b9c2d0;border-top-color:#e8ecf2;border-left-color:#e8ecf2;border-right-color:#6f7f99;border-bottom-color:#6f7f99"><s class="tri-up" style="border-bottom-color:#2b3340"></s></i></div>
<div class="row" style="top:147px;height:29px"></div>
<div class="abs" style="left:1622px;top:153px;font-size:15px;line-height:19px;color:#222;white-space:nowrap">Bitmap Layer 1</div>
<div class="rh" style="top:196px"><b>Reliefs</b><i class="btn" style="right:7px;top:1px;background:#b9c2d0;border-top-color:#e8ecf2;border-left-color:#e8ecf2;border-right-color:#6f7f99;border-bottom-color:#6f7f99"><s class="tri-up" style="border-bottom-color:#2b3340"></s></i></div>
<!-- combo -->
<div class="abs" style="left:1591px;top:217px;width:299px;height:27px;background:#fff;border-top:2px solid #7b7b7b;border-left:2px solid #7b7b7b;border-right:1px solid #e8e8e8;border-bottom:1px solid #e8e8e8"></div>
<div class="abs" style="left:1593px;top:219px;font-size:15.300px;line-height:19px;color:#222;white-space:nowrap">Front Relief</div>
<div class="abs" style="left:1868px;top:219px;width:21px;height:24px;background:#f0f0f0;border-top:1px solid #fff;border-left:1px solid #fff;border-right:2px solid #777;border-bottom:2px solid #777"></div>
<svg class="abs" style="left:1872px;top:227px" width="12" height="8" viewBox="0 0 12 8"><path d="M1.500 1.500h9l-4.500 4.500z" fill="#111"/></svg>
<div class="row" style="top:280px;height:32px"></div>
<svg class="abs" style="left:1633px;top:291px" width="8" height="12" viewBox="0 0 8 12"><path d="M1.500 1.500v9l5-4.500z" fill="#111"/></svg>
<div class="abs" style="left:1648px;top:288px;font-size:15px;line-height:19px;color:#222;white-space:nowrap">Relief Layer 1</div>
<!-- up/down buttons -->
<svg class="abs" style="left:1851px;top:316px" width="40" height="16" viewBox="0 0 40 16">
 <defs><linearGradient id="bl" x1="0" y1="0" x2="0" y2="1"><stop offset="0" stop-color="#2f6fd8"/><stop offset="1" stop-color="#0c3a99"/></linearGradient></defs>
 <rect x="1" y="0.500" width="15" height="15" rx="1.500" fill="url(#bl)"/><rect x="23.500" y="0.500" width="15" height="15" rx="1.500" fill="url(#bl)"/>
 <path d="M8.500 13V4.500M4.500 8l4-4 4 4" fill="none" stroke="#fff" stroke-width="2.200"/>
 <path d="M31 3v8.500M27 8l4 4 4-4" fill="none" stroke="#fff" stroke-width="2.200"/>
</svg>
<!--RIGHTICONS-->
<!-- right bottom tabs -->
<div class="abs" style="left:1581px;top:1022px;width:339px;height:32px;overflow:hidden">
 <svg class="abs" style="left:0;top:0" width="339" height="32"><defs><filter id="tx2" x="0" y="0" width="100%" height="100%"><feTurbulence type="fractalNoise" baseFrequency="0.14 0.30" numOctaves="2" seed="8"/><feColorMatrix type="matrix" values="0 0 0 0 0.93  0 0 0 0 0.93  0 0 0 0 0.93  1.25 1.25 0 0 -0.98"/></filter></defs><rect width="339" height="32" fill="#d1d1d1"/><g transform="rotate(-58 169 16)"><rect x="-120" y="-220" width="579" height="480" filter="url(#tx2)"/></g></svg>
 <div class="abs" style="left:0;top:0;width:61px;height:30px;background:#f0f0f0;border-radius:0 0 7px 7px;border-right:1px solid #b5b5b5;border-bottom:1px solid #b5b5b5"></div>
 <div class="abs" style="left:62px;top:1px;width:60px;height:29px;background:#f2f2f2;border-radius:0 0 7px 7px;border:1px solid #c3c3c3;border-top:1px solid #e8e8e8"></div>
 <div class="abs" style="left:10px;top:5px;font-size:14.300px;line-height:19px;color:#222">Layers</div>
 <div class="abs" style="left:70px;top:6px;font-size:14.300px;line-height:19px;color:#222">Add In</div>
</div>
<svg class="abs" style="left:1585px;top:110px" width="320" height="210" viewBox="1585 110 320 210">
<defs>
<linearGradient id="r_gPage" x1="0" y1="0" x2="1" y2="1"><stop offset="0" stop-color="#c9d6ea"/><stop offset="1" stop-color="#7f97bd"/></linearGradient>
<linearGradient id="r_gFold" x1="0" y1="0" x2="0" y2="1"><stop offset="0" stop-color="#fbf535"/><stop offset="1" stop-color="#d9c800"/></linearGradient>
<linearGradient id="r_gBlue" x1="0" y1="0" x2="0" y2="1"><stop offset="0" stop-color="#3b7ae8"/><stop offset="1" stop-color="#0f48b8"/></linearGradient>
<linearGradient id="r_gGold" x1="0" y1="0" x2="1" y2="1"><stop offset="0" stop-color="#f8e6a8"/><stop offset="0.500" stop-color="#e6c062"/><stop offset="1" stop-color="#bc9038"/></linearGradient>
<linearGradient id="r_gLav" x1="0" y1="0" x2="0" y2="1"><stop offset="0" stop-color="#b5b5f2"/><stop offset="1" stop-color="#6f6fd0"/></linearGradient>
<radialGradient id="r_gBulb" cx="0.400" cy="0.350" r="0.700"><stop offset="0" stop-color="#fff6b0"/><stop offset="0.600" stop-color="#f6c420"/><stop offset="1" stop-color="#c77b08"/></radialGradient>
<filter id="r_ib" x="-20%" y="-20%" width="140%" height="140%"><feGaussianBlur stdDeviation="0.450"/></filter>
<filter id="r_ib1" x="-30%" y="-30%" width="160%" height="160%"><feGaussianBlur stdDeviation="1.200"/></filter>
</defs>
<g transform="translate(1599.5 130.5)" filter="url(#r_ib)"><g transform="scale(0.62)"><path d="M-3 12 L14 12 L17 5 L4 5Z" fill="#b9b9b9" filter="url(#r_ib1)"/>
<path d="M-10 -14 L2 -14 L9 -7 L9 13 L-10 13Z" fill="url(#r_gPage)"/><path d="M2 -14 L2 -7 L9 -7Z" fill="#f4f7fb"/></g></g>
<g transform="translate(1638.5 129)" filter="url(#r_ib)"><g transform="scale(0.6)"><path d="M-8 12 L16 10 L19 4 L-2 6Z" fill="#bdbdbd" filter="url(#r_ib1)"/>
<path d="M-16 -6 C-16 -10 -13 -13 -10 -13 L-3 -12 L0 -9 L8 -9 L9 -2 L-12 3Z" fill="#f5ee22"/>
<path d="M-13 14 L-16 -2 C-8 -4 6 -3 17 -1 L14 11 C6 12 -4 14 -13 14Z" fill="url(#r_gFold)"/></g></g>
<g transform="translate(1676 130.5)" filter="url(#r_ib)"><g transform="scale(0.62)"><path d="M8 13 L18 8 L19 4 L10 6Z" fill="#b9b9b9" filter="url(#r_ib1)"/>
<rect x="-13" y="-12" width="26" height="25" rx="2" fill="url(#r_gBlue)"/><rect x="-8" y="-10" width="17" height="11" fill="#e9e9ee"/><rect x="-8" y="-10" width="17" height="3" fill="#cfd3da"/>
<rect x="-7" y="4" width="14" height="9" fill="#c8ccd4"/><rect x="-5" y="5" width="5" height="7" rx="1" fill="#1a4fb8"/></g></g>
<g transform="translate(1718 130.5)" filter="url(#r_ib)"><path d="M-8 -9 L-6 -7 L-3 -10 L0 -7 L3 -9 L9 6 L10 10 L4 9 L-2 10 L-7 6 L-9 2 L-7 -1 L-9 -4Z" fill="#b99a72"/><path d="M-4 -4 L4 -3 L7 6 L-2 6Z" fill="#d0b48c"/><path d="M-6 9 L10 10 L12 7" stroke="#c9c9c9" stroke-width="2" fill="none"/></g>
<g transform="translate(1757.5 130.5)" filter="url(#r_ib)"><defs><linearGradient id="gGs" x1="0" y1="0" x2="1" y2="1"><stop offset="0" stop-color="#8e8e8e"/><stop offset="1" stop-color="#f4f4f4"/></linearGradient></defs><path d="M-6 9 L9 9 L11 4 L9 4Z" fill="#b9b9b9"/><rect x="-9" y="-9" width="17" height="16" fill="url(#gGs)"/></g>
<g transform="translate(1797.5 130.5)" filter="url(#r_ib)"><path d="M-3 0 L11 0 L12 10 L-6 10Z" fill="#8a8ad8"/><rect x="-11" y="-10" width="13" height="15" fill="#14100a"/><rect x="-3" y="-10" width="5" height="7" fill="#8a9060"/><ellipse cx="-5" cy="-4" rx="2.500" ry="3.200" fill="#e0aa6a"/><path d="M-9 5 C-8 0 -2 0 -1 5Z" fill="#c88a4a"/></g>
<g transform="translate(1837 130)" filter="url(#r_ib)"><path d="M-6 -4 L6 -4 L4.500 9 C2 10.500 -2 10.500 -4.500 9Z" fill="#4a8ae8"/><path d="M-2 -3 L0 -3 L0 9 L-2 9Z" fill="#8ab8f8"/><ellipse cx="0" cy="-5" rx="7" ry="3" fill="#8ec0fa" stroke="#3a72d0" stroke-width="1"/><ellipse cx="0" cy="-5" rx="4" ry="1.500" fill="#d8ecff"/></g>
<g transform="translate(1877 130.5)" filter="url(#r_ib)"><rect x="-11" y="-11" width="22" height="22" fill="#fafafa"/><path d="M-11 11V-11H11" fill="none" stroke="#9a9a9a" stroke-width="1"/><g transform="translate(-3.500 1)"><circle cx="0" cy="-3" r="6" fill="url(#r_gBulb)"/><path d="M-3 2 L3 2 L2 7 L-2 7Z" fill="#d88a10"/><rect x="-2" y="7" width="4" height="3" fill="#2a1a08"/></g><g transform="translate(4 -2)"><circle cx="0" cy="-3" r="6" fill="url(#r_gBulb)"/><path d="M-3 2 L3 2 L2 7 L-2 7Z" fill="#d88a10"/><rect x="-2" y="7" width="4" height="3" fill="#2a1a08"/></g></g>
<g transform="translate(1604.5 161.5)" filter="url(#r_ib)"><rect x="-10.500" y="-10.500" width="21" height="21" fill="#12100a"/><rect x="2" y="-10.500" width="8.500" height="10" fill="#8a9468"/><rect x="-10.500" y="-10.500" width="6" height="8" fill="#6a7450"/><path d="M-8 10.500 C-9 0 -6 -9 0 -9 C6 -9 7 0 7 10.500Z" fill="#20160a"/><ellipse cx="0" cy="-3.500" rx="3" ry="4" fill="#e6b070"/><path d="M-5 10.500 C-4 3 4 3 5 10.500Z" fill="#d49a58"/><path d="M-9 8 h18 v2.500 h-18z" fill="#c8b040" opacity="0.700"/></g>
<g transform="translate(1599.5 264)" filter="url(#r_ib)"><g transform="scale(0.62)"><path d="M-3 12 L14 12 L17 5 L4 5Z" fill="#b9b9b9" filter="url(#r_ib1)"/>
<path d="M-10 -14 L2 -14 L9 -7 L9 13 L-10 13Z" fill="url(#r_gPage)"/><path d="M2 -14 L2 -7 L9 -7Z" fill="#f4f7fb"/></g></g>
<g transform="translate(1634.5 262.5)" filter="url(#r_ib)"><g transform="scale(0.6)"><path d="M-8 12 L16 10 L19 4 L-2 6Z" fill="#bdbdbd" filter="url(#r_ib1)"/>
<path d="M-16 -6 C-16 -10 -13 -13 -10 -13 L-3 -12 L0 -9 L8 -9 L9 -2 L-12 3Z" fill="#f5ee22"/>
<path d="M-13 14 L-16 -2 C-8 -4 6 -3 17 -1 L14 11 C6 12 -4 14 -13 14Z" fill="url(#r_gFold)"/></g></g>
<g transform="translate(1666.5 264)" filter="url(#r_ib)"><g transform="scale(0.62)"><path d="M8 13 L18 8 L19 4 L10 6Z" fill="#b9b9b9" filter="url(#r_ib1)"/>
<rect x="-13" y="-12" width="26" height="25" rx="2" fill="url(#r_gBlue)"/><rect x="-8" y="-10" width="17" height="11" fill="#e9e9ee"/><rect x="-8" y="-10" width="17" height="3" fill="#cfd3da"/>
<rect x="-7" y="4" width="14" height="9" fill="#c8ccd4"/><rect x="-5" y="5" width="5" height="7" rx="1" fill="#1a4fb8"/></g></g>
<g transform="translate(1703.5 264)" filter="url(#r_ib)"><path d="M-8 -9 L-6 -7 L-3 -10 L0 -7 L3 -9 L9 6 L10 10 L4 9 L-2 10 L-7 6 L-9 2 L-7 -1 L-9 -4Z" fill="#b99a72"/><path d="M-4 -4 L4 -3 L7 6 L-2 6Z" fill="#d0b48c"/><path d="M-6 9 L10 10 L12 7" stroke="#c9c9c9" stroke-width="2" fill="none"/></g>
<g transform="translate(1738 264)" filter="url(#r_ib)"><path d="M-10 4 L0 -1 L10 4 L0 10Z" fill="#c8181a"/><path d="M-4 4 L0 2 L4 4 L0 7Z" fill="#f4d020"/><path d="M-10 -4 L0 -10 L10 -4 L0 1Z" fill="#8a8ae0"/><path d="M-10 -4 L0 -10 L10 -4" fill="none" stroke="#b8b8f6" stroke-width="1"/></g>
<g transform="translate(1772.5 264)" filter="url(#r_ib)"><path d="M-7 -10 L3 -10 L7 -6 L7 10 L-7 10Z" fill="#a8b8d4"/><path d="M3 -10 L3 -6 L7 -6Z" fill="#eef2f8"/><g transform="translate(0 1) scale(0.9)"><circle cx="0" cy="-3" r="6" fill="url(#r_gBulb)"/><path d="M-3 2 L3 2 L2 7 L-2 7Z" fill="#d88a10"/><rect x="-2" y="7" width="4" height="3" fill="#2a1a08"/></g></g>
<g transform="translate(1808 264)" filter="url(#r_ib)"><rect x="-9" y="-9" width="18" height="18" fill="#050505"/><g fill="#c9c9c9"><circle cx="-3.500" cy="-5.500" r="2"/><circle cx="3.500" cy="-5.500" r="2"/><circle cx="0" cy="-3.500" r="3.500"/><ellipse cx="0" cy="3" rx="5" ry="5.500"/><ellipse cx="-5.500" cy="1" rx="1.800" ry="3.500"/><ellipse cx="5.500" cy="1" rx="1.800" ry="3.500"/></g><ellipse cx="0" cy="3.500" rx="2.800" ry="3" fill="#7a7a7a"/><path d="M6 -6 h2.500" stroke="#eee" stroke-width="1"/></g>
<g transform="translate(1842 263.5)" filter="url(#r_ib)"><path d="M-6 -4 L6 -4 L4.500 9 C2 10.500 -2 10.500 -4.500 9Z" fill="#4a8ae8"/><path d="M-2 -3 L0 -3 L0 9 L-2 9Z" fill="#8ab8f8"/><ellipse cx="0" cy="-5" rx="7" ry="3" fill="#8ec0fa" stroke="#3a72d0" stroke-width="1"/><ellipse cx="0" cy="-5" rx="4" ry="1.500" fill="#d8ecff"/></g>
<g transform="translate(1877 264)" filter="url(#r_ib)"><rect x="-11" y="-11" width="22" height="22" fill="#fafafa"/><path d="M-11 11V-11H11" fill="none" stroke="#9a9a9a" stroke-width="1"/><g transform="translate(-3.500 1)"><circle cx="0" cy="-3" r="6" fill="url(#r_gBulb)"/><path d="M-3 2 L3 2 L2 7 L-2 7Z" fill="#d88a10"/><rect x="-2" y="7" width="4" height="3" fill="#2a1a08"/></g><g transform="translate(4 -2)"><circle cx="0" cy="-3" r="6" fill="url(#r_gBulb)"/><path d="M-3 2 L3 2 L2 7 L-2 7Z" fill="#d88a10"/><rect x="-2" y="7" width="4" height="3" fill="#2a1a08"/></g></g>
<g transform="translate(1614 297)" filter="url(#r_ib)"><path d="M-11 6 C-12 -6 -2 -12 6 -8 C12 -4 13 2 12 6 L8 8 C6 0 -2 -2 -8 8Z" fill="url(#r_gGold)"/><path d="M-8 8 C-8 -2 4 -4 8 8 C4 10 -4 10 -8 8Z" fill="#8e8edc"/><path d="M-13 10 h7 M-9.500 6.500 v7" stroke="#111" stroke-width="1.300"/></g>
<g transform="translate(1877 296.5)" filter="url(#r_ib)"><rect x="-11" y="-11" width="22" height="22" fill="#e9e9e9"/><path d="M-11 11V-11H11" fill="none" stroke="#9a9a9a" stroke-width="1"/><path d="M-11 11H11V-11" fill="none" stroke="#fafafa" stroke-width="1"/><g transform="translate(0 1)"><circle cx="0" cy="-3" r="6" fill="url(#r_gBulb)"/><path d="M-3 2 L3 2 L2 7 L-2 7Z" fill="#d88a10"/><rect x="-2" y="7" width="4" height="3" fill="#2a1a08"/></g></g>
</svg>

</body></html>
